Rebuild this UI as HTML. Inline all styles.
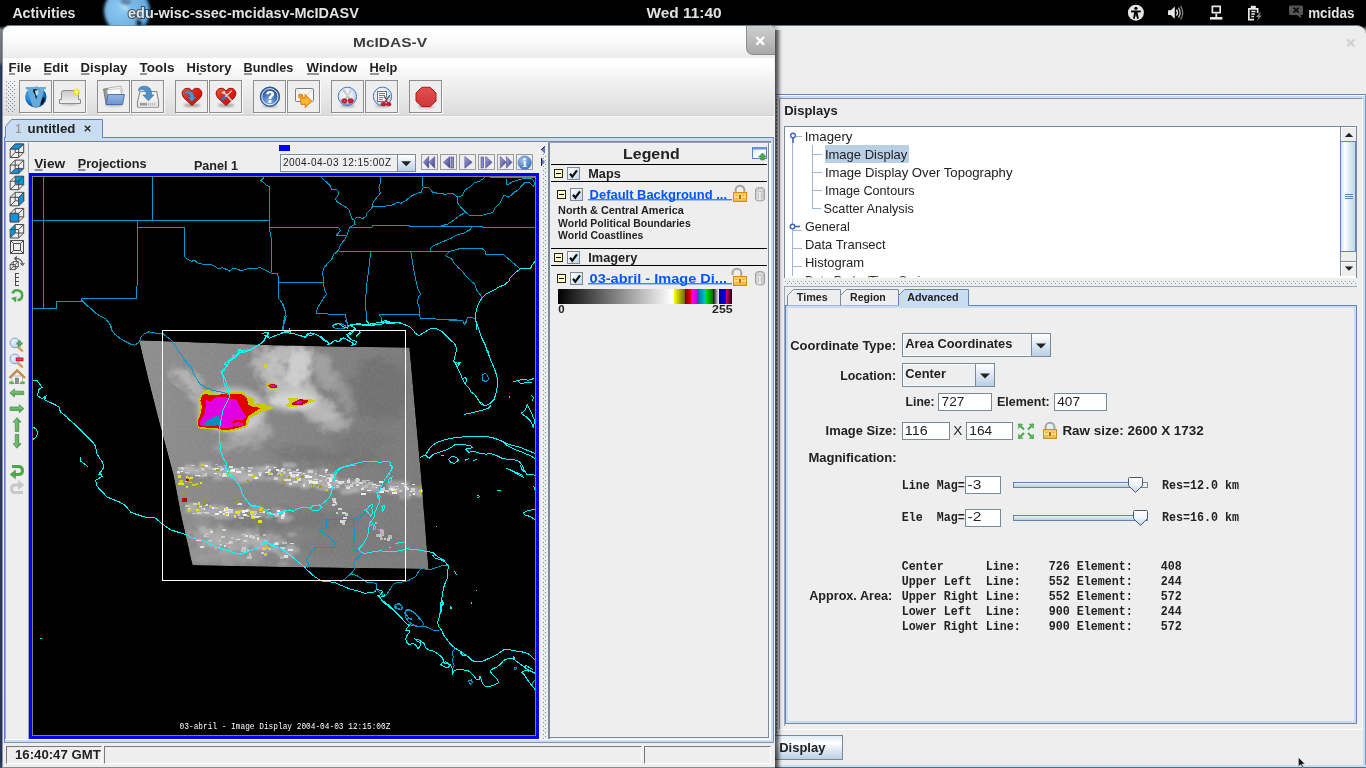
<!DOCTYPE html>
<html><head><meta charset="utf-8"><title>McIDAS-V</title>
<style>
html,body{margin:0;padding:0;}
body{width:1366px;height:768px;overflow:hidden;position:relative;background:#1c2a4a;font-family:"Liberation Sans",sans-serif;}
.a{position:absolute;box-sizing:border-box;}
.tb{position:absolute;box-sizing:border-box;width:33px;height:33px;top:80px;border:1px solid #8e8e8e;background:#eeeeee;box-shadow:1px 1px 0 #fbfbfb;}
.fld{position:absolute;box-sizing:border-box;background:#fff;border:1px solid #7a8a99;}
.ab{position:absolute;box-sizing:border-box;width:17px;height:16px;top:154px;border:1px solid #9a9a9a;background:#eeeeee;}
.ln{position:absolute;height:1px;background:#000;left:551px;width:216px;}
.mb{position:absolute;box-sizing:border-box;width:9px;height:9px;border:1px solid #222;background:#ffffc0;}
.mb:after{content:"";position:absolute;left:1px;top:3px;width:5px;height:1px;background:#000;}
.cb{position:absolute;box-sizing:border-box;width:13px;height:13px;border:1px solid #7a8a99;background:linear-gradient(135deg,#ffffff 0%,#c4d6ea 100%);}
</style></head><body>
<!-- desktop strip -->
<div class="a" style="left:0;top:0;width:1366px;height:768px;background:linear-gradient(180deg,#000 0px,#000 26px,#a4a4a4 30px,#8c8c8c 62px,#3a4a78 66px,#3a4a74 400px,#34446c 760px,#4a5470 768px);"></div>
<!-- top bar -->
<div class="a" style="left:0;top:0;width:1366px;height:26px;background:#000;"></div>
<!-- ===== right window ===== -->
<div class="a" style="left:770px;top:25px;width:596px;height:743px;background:#ededed;border-top-right-radius:9px;border-top:1px solid #6a7684;"></div>
<div class="a" style="left:770px;top:767px;width:596px;height:1px;background:#5a6a80;"></div>
<!-- tabbed pane outer border -->
<div class="a" style="left:775px;top:94px;width:591px;height:1px;background:#6382bf;"></div>
<div class="a" style="left:775px;top:95px;width:591px;height:1px;background:#ffffff;"></div>
<div class="a" style="left:775px;top:96px;width:591px;height:2px;background:#c8ddf2;"></div>
<div class="a" style="left:1363px;top:96px;width:2px;height:671px;background:#c8ddf2;"></div>
<div class="a" style="left:1365px;top:94px;width:1px;height:674px;background:#7f95bd;"></div>
<div class="a" style="left:770px;top:765px;width:596px;height:2px;background:#c8ddf2;"></div>
<div class="a" style="left:770px;top:767px;width:596px;height:1px;background:#5a6a80;"></div>
<!-- inner etched box -->
<div class="a" style="left:779px;top:98px;width:584px;height:632px;border:1px solid #8a97a6;border-right-color:#fff;border-bottom-color:#fff;background:#eeeeee;"></div>
<!-- vertical dotted splitter near left -->
<svg class="a" style="left:775px;top:98px;" width="4" height="635"><defs><pattern id="vdot" width="4" height="4" patternUnits="userSpaceOnUse"><rect x="1" y="1" width="1" height="2" fill="#3a3a3a" fill-opacity="0.6"/></pattern><pattern id="hdot" width="4" height="4" patternUnits="userSpaceOnUse"><rect x="0" y="0" width="1" height="1" fill="#8a97a6"/><rect x="2" y="2" width="1" height="1" fill="#8a97a6"/></pattern></defs><rect width="4" height="635" fill="url(#vdot)" shape-rendering="crispEdges"/></svg>
<!-- tree box -->
<div class="a" style="left:784px;top:126px;width:573px;height:152px;background:#fff;border:1px solid #7a8a99;border-bottom:none;"></div>
<!-- selection -->
<div class="a" style="left:825px;top:145px;width:84px;height:18px;background:#b8cfe5;"></div>
<!-- scrollbar -->
<div class="a" style="left:1340px;top:127px;width:16px;height:149px;background:#eeeeee;border-left:1px solid #7a8a99;"></div>
<div class="a" style="left:1340px;top:127px;width:16px;height:15px;background:#eeeeee;box-shadow:inset 1px 1px 0 #fff;border:1px solid #7a8a99;border-top:none;border-right:none;"></div>
<div class="a" style="left:1340px;top:261px;width:16px;height:15px;background:#eeeeee;box-shadow:inset 1px 1px 0 #fff;border:1px solid #7a8a99;border-bottom:none;border-right:none;"></div>
<div class="a" style="left:1340px;top:141px;width:16px;height:111px;background:linear-gradient(90deg,#cfe0f3 0%,#ffffff 28%,#dfeaf6 60%,#c4d7ec 100%);border:1px solid #6382bf;"></div>
<!-- horizontal dotted splitter -->
<svg class="a" style="left:785px;top:281px;" width="571" height="4"><rect width="573" height="4" fill="url(#hdot)" shape-rendering="crispEdges"/></svg>
<!-- bottom panel top border -->
<div class="a" style="left:784px;top:286px;width:573px;height:1px;background:#9aa7b4;"></div>
<div class="a" style="left:784px;top:286px;width:1px;height:440px;background:#9aa7b4;"></div>
<!-- tabs content -->
<div class="a" style="left:785px;top:305px;width:572px;height:419px;background:#eeeeee;border:1px solid #6382bf;border-bottom-color:#7a8a99;box-shadow:inset 0 0 0 2px #c8ddf2;"></div>
<!-- tabs -->
<svg class="a" style="left:785px;top:287px;" width="200" height="22" viewBox="0 0 200 22">
<path d="M2.5,18.5 L2.5,8.5 L8.5,2.5 L55.5,2.5 L55.5,18.5" fill="#eeeeee" stroke="#7a8a99"/>
<path d="M55.5,18.5 L55.5,8.5 L61.5,2.5 L113.5,2.5 L113.5,18.5" fill="#eeeeee" stroke="#7a8a99"/>
<path d="M113.5,21 L113.5,8.5 L119.5,2.5 L183.5,2.5 L183.5,21 Z" fill="#c8ddf2" stroke="none"/>
<path d="M113.5,18.5 L113.5,8.5 L119.5,2.5 L183.5,2.5 L183.5,18.5" fill="none" stroke="#6382bf"/>
</svg>
<!-- combos -->
<div class="a" style="left:902px;top:333px;width:149px;height:24px;border:1px solid #7a8a99;background:#eeeeee;box-shadow:inset 0 0 0 1px #fff;"></div>
<div class="a" style="left:1031px;top:333px;width:20px;height:24px;border:1px solid #7a8a99;background:linear-gradient(180deg,#ffffff 0%,#dde8f3 50%,#b8cfe5 100%);"></div>
<div class="a" style="left:902px;top:363px;width:93px;height:24px;border:1px solid #7a8a99;background:#eeeeee;box-shadow:inset 0 0 0 1px #fff;"></div>
<div class="a" style="left:975px;top:363px;width:20px;height:24px;border:1px solid #7a8a99;background:linear-gradient(180deg,#ffffff 0%,#dde8f3 50%,#b8cfe5 100%);"></div>
<!-- fields -->
<div class="fld" style="left:938px;top:393px;width:54px;height:18px;"></div>
<div class="fld" style="left:1054px;top:393px;width:53px;height:18px;"></div>
<div class="fld" style="left:902px;top:422px;width:48px;height:18px;"></div>
<div class="fld" style="left:966px;top:422px;width:47px;height:18px;"></div>
<div class="fld" style="left:965px;top:476px;width:36px;height:18px;"></div>
<div class="fld" style="left:965px;top:509px;width:36px;height:18px;"></div>
<!-- sliders -->
<div class="a" style="left:1013px;top:482px;width:135px;height:6px;border:1px solid #6382bf;background:linear-gradient(180deg,#e8f0fa,#b8cfe5);"></div>
<div class="a" style="left:1013px;top:515px;width:135px;height:6px;border:1px solid #6382bf;background:linear-gradient(180deg,#e8f0fa,#b8cfe5);"></div>
<!-- Display button -->
<div class="a" style="left:770px;top:735px;width:73px;height:25px;border:1px solid #7a8a99;background:linear-gradient(180deg,#dfe9f4 0%,#ffffff 30%,#dbe6f2 65%,#b8cfe5 100%);"></div>
<!-- ===== left window ===== -->
<div class="a" style="left:2px;top:25px;width:773px;height:743px;background:#eeeeee;border-top-left-radius:8px;border-top-right-radius:6px;box-shadow:0 0 6px 1px rgba(0,0,0,0.5);border-left:1px solid #8a96b0;"></div>
<div class="a" style="left:775px;top:30px;width:7px;height:738px;background:linear-gradient(90deg,rgba(0,0,0,0.55) 0%,rgba(0,0,0,0.42) 35%,rgba(0,0,0,0.15) 70%,rgba(0,0,0,0) 100%);"></div>
<!-- title bar -->
<div class="a" style="left:3px;top:25px;width:772px;height:33px;border-top-left-radius:7px;border-top-right-radius:6px;background:linear-gradient(180deg,#ffffff 0%,#fafafa 50%,#ebebeb 100%);border-top:1px solid #6a7a8a;"></div>
<!-- close button -->
<div class="a" style="left:746px;top:26px;width:29px;height:29px;border-bottom-left-radius:7px;border-top-right-radius:6px;background:linear-gradient(180deg,#cecece 0%,#bcbcbc 50%,#a8a8a8 100%);border-left:1px solid #8e8e8e;border-bottom:1px solid #8a8a8a;"></div>
<!-- menu + toolbar gradient -->
<div class="a" style="left:3px;top:58px;width:771px;height:58px;background:linear-gradient(180deg,#ffffff 0%,#fdfdfd 12%,#f1f1f1 40%,#e7e7e7 70%,#dcdcdc 97%,#cdcdcd 100%);"></div>
<div class="a" style="left:4px;top:116px;width:770px;height:1px;background:#f8f8f8;"></div>
<!-- toolbar grip -->
<svg class="a" style="left:6px;top:81px;" width="10" height="32"><defs><pattern id="grip" width="4" height="4" patternUnits="userSpaceOnUse"><rect x="0" y="0" width="1" height="1" fill="#7a8a99"/><rect x="2" y="2" width="1" height="1" fill="#7a8a99"/></pattern></defs><rect width="10" height="32" fill="url(#grip)" shape-rendering="crispEdges"/></svg>
<!-- toolbar buttons -->
<div class="tb" style="left:19px;"></div><div class="tb" style="left:53px;"></div>
<div class="tb" style="left:97px;"></div><div class="tb" style="left:131px;"></div>
<div class="tb" style="left:175px;"></div><div class="tb" style="left:209px;"></div>
<div class="tb" style="left:253px;"></div><div class="tb" style="left:287px;"></div>
<div class="tb" style="left:331px;"></div><div class="tb" style="left:365px;"></div>
<div class="tb" style="left:409px;"></div>
<!-- tab pane content border -->
<div class="a" style="left:4px;top:137px;width:770px;height:606px;border:1px solid #6382bf;border-bottom-color:#8494a6;border-right-color:#7f95bd;background:#c8ddf2;"></div>
<div class="a" style="left:5px;top:141px;width:766px;height:598px;background:#eeeeee;border-top:1px solid #828282;border-left:1px solid #9aa7b4;"></div>
<div class="a" style="left:548px;top:142px;width:223px;height:1px;background:#9aa4b0;"></div>
<!-- tab -->
<svg class="a" style="left:4px;top:118px;" width="104" height="24" viewBox="0 0 104 24">
<path d="M1.5,22 L1.5,8.5 L7.5,1.5 L98.5,1.5 L98.5,22 Z" fill="#c8ddf2"/>
<path d="M1.5,20 L1.5,8.5 L7.5,1.5 L98.5,1.5 L98.5,19.5" fill="none" stroke="#6382bf"/>
</svg>
<!-- left icon column separator -->
<div class="a" style="left:28px;top:143px;width:1px;height:597px;background:#9aa7b4;"></div>
<!-- view border -->
<div class="a" style="left:29px;top:173px;width:510px;height:566px;background:#0000ff;"></div>
<div class="a" style="left:32px;top:176px;width:504px;height:560px;background:#808080;"></div>
<div class="a" style="left:33px;top:177px;width:502px;height:558px;background:#000;"></div>
<!-- anim widgets -->
<div class="a" style="left:279px;top:145px;width:11px;height:6px;background:#0000ff;"></div>
<div class="a" style="left:280px;top:154px;width:136px;height:18px;border:1px solid #7a8a99;background:#eeeeee;box-shadow:inset 0 0 0 1px #fff;"></div>
<div class="a" style="left:397px;top:154px;width:19px;height:18px;border:1px solid #7a8a99;background:linear-gradient(180deg,#ffffff 0%,#dde8f3 50%,#b8cfe5 100%);"></div>
<div class="ab" style="left:421px;"></div><div class="ab" style="left:440px;"></div><div class="ab" style="left:459px;"></div>
<div class="ab" style="left:478px;"></div><div class="ab" style="left:497px;"></div><div class="ab" style="left:516px;"></div>
<!-- splitter -->
<svg class="a" style="left:543px;top:154px;" width="3" height="585"><rect width="3" height="585" fill="url(#grip)" shape-rendering="crispEdges"/></svg>
<div class="a" style="left:548px;top:143px;width:2px;height:596px;background:#7a8a99;"></div>
<!-- legend -->
<div class="a" style="left:550px;top:143px;width:219px;height:595px;background:#eeeeee;border-right:1px solid #7a8a99;border-bottom:1px solid #7a8a99;"></div>
<div class="a" style="left:769px;top:143px;width:2px;height:597px;background:#fff;"></div>
<div class="a" style="left:5px;top:739px;width:766px;height:1px;background:#fff;"></div>
<div class="ln" style="top:164px;"></div><div class="ln" style="top:181px;"></div>
<div class="ln" style="top:248px;"></div><div class="ln" style="top:265px;"></div>
<div class="mb" style="left:554px;top:169px;"></div><div class="cb" style="left:567px;top:167px;"></div>
<div class="mb" style="left:557px;top:190px;"></div><div class="cb" style="left:570px;top:188px;"></div>
<div class="mb" style="left:554px;top:253px;"></div><div class="cb" style="left:567px;top:251px;"></div>
<div class="mb" style="left:557px;top:274px;"></div><div class="cb" style="left:570px;top:272px;"></div>
<!-- colorbar -->
<div class="a" style="left:558px;top:289px;width:174px;height:15px;background:linear-gradient(90deg,#000 0px,#fff 114px,#fff 116px,#ffff00 116px,#6a6a00 127px,#700000 127px,#ff0000 133px,#ff00ff 134px,#c000c0 140px,#0070a0 140px,#00c8d8 148px,#00e000 148px,#007000 155px,#000 155px,#fff 161px,#000090 161px,#0000ff 168px,#e00070 168px,#200010 174px);"></div>
<!-- status bar -->
<div class="a" style="left:4px;top:743px;width:770px;height:3px;background:#eeeeee;"></div>
<div class="a" style="left:6px;top:746px;width:96px;height:18px;border:1px solid #7a7a7a;border-right-color:#fff;border-bottom-color:#fff;background:#eeeeee;"></div>
<div class="a" style="left:104px;top:746px;width:538px;height:18px;border:1px solid #7a7a7a;border-right-color:#fff;border-bottom-color:#fff;background:#eeeeee;"></div>
<div class="a" style="left:644px;top:746px;width:127px;height:18px;border:1px solid #7a7a7a;border-right-color:#fff;border-bottom-color:#fff;background:#eeeeee;"></div>
<div class="a" style="left:3px;top:767px;width:772px;height:1px;background:#8a8a8a;"></div>
<!-- map -->
<svg class="a" style="left:33px;top:177px;" width="502" height="558" viewBox="33 177 502 558">
<defs><clipPath id="satc"><polygon points="139.0,340.2 200.0,342.5 280.0,345.5 350.0,346.8 409.5,347.5 412.0,375.0 416.0,420.0 421.0,475.0 425.0,525.0 428.5,569.0 350.0,568.0 280.0,567.0 192.5,565.3 181.0,515.0 173.5,475.0 160.0,425.0 148.0,378.0"/></clipPath>
<filter id="b6" x="-50%" y="-50%" width="200%" height="200%"><feGaussianBlur stdDeviation="6"/></filter>
<filter id="b3" x="-50%" y="-50%" width="200%" height="200%"><feGaussianBlur stdDeviation="3"/></filter>
<filter id="b15" x="-50%" y="-50%" width="200%" height="200%"><feGaussianBlur stdDeviation="1.5"/></filter>
<filter id="cl" x="-30%" y="-30%" width="160%" height="160%"><feGaussianBlur stdDeviation="3.5" result="b"/><feTurbulence type="fractalNoise" baseFrequency="0.09" numOctaves="3" seed="4" result="t"/><feDisplacementMap in="b" in2="t" scale="16" xChannelSelector="R" yChannelSelector="G"/></filter>
<filter id="nz" x="0" y="0" width="100%" height="100%"><feTurbulence type="fractalNoise" baseFrequency="0.35" numOctaves="2" seed="9"/><feColorMatrix type="matrix" values="0 0 0 0 1  0 0 0 0 1  0 0 0 0 1  1.2 0 0 0 -0.45"/></filter>
<linearGradient id="satg" x1="0" y1="0" x2="1" y2="0"><stop offset="0" stop-color="#8e8e8e"/><stop offset="0.5" stop-color="#848484"/><stop offset="1" stop-color="#7a7a7a"/></linearGradient></defs>
<g clip-path="url(#satc)">
<polygon points="139.0,340.2 200.0,342.5 280.0,345.5 350.0,346.8 409.5,347.5 412.0,375.0 416.0,420.0 421.0,475.0 425.0,525.0 428.5,569.0 350.0,568.0 280.0,567.0 192.5,565.3 181.0,515.0 173.5,475.0 160.0,425.0 148.0,378.0" fill="url(#satg)"/>
<ellipse cx="266" cy="364" rx="14" ry="16" fill="#c6c6c6" opacity="0.7" filter="url(#cl)" transform="rotate(10 266 364)"/>
<ellipse cx="283" cy="352" rx="14" ry="8" fill="#cccccc" opacity="0.7" filter="url(#cl)" transform="rotate(0 283 352)"/>
<ellipse cx="299" cy="366" rx="12" ry="22" fill="#dadada" opacity="0.85" filter="url(#cl)" transform="rotate(15 299 366)"/>
<ellipse cx="292" cy="392" rx="27" ry="15" fill="#d0d0d0" opacity="0.75" filter="url(#cl)" transform="rotate(10 292 392)"/>
<ellipse cx="275" cy="372" rx="9" ry="20" fill="#c8c8c8" opacity="0.7" filter="url(#cl)" transform="rotate(20 275 372)"/>
<ellipse cx="310" cy="405" rx="30" ry="11" fill="#c8c8c8" opacity="0.7" filter="url(#cl)" transform="rotate(25 310 405)"/>
<ellipse cx="250" cy="430" rx="22" ry="9" fill="#c4c4c4" opacity="0.6" filter="url(#cl)" transform="rotate(-10 250 430)"/>
<ellipse cx="240" cy="444" rx="26" ry="6" fill="#bcbcbc" opacity="0.5" filter="url(#cl)" transform="rotate(-8 240 444)"/>
<ellipse cx="330" cy="420" rx="22" ry="10" fill="#bcbcbc" opacity="0.7" filter="url(#cl)" transform="rotate(30 330 420)"/>
<ellipse cx="188" cy="380" rx="20" ry="7" fill="#c0c0c0" opacity="0.8" filter="url(#cl)" transform="rotate(35 188 380)"/>
<ellipse cx="200" cy="398" rx="14" ry="7" fill="#bebebe" opacity="0.7" filter="url(#cl)" transform="rotate(30 200 398)"/>
<ellipse cx="325" cy="372" rx="10" ry="22" fill="#b4b4b4" opacity="0.6" filter="url(#cl)" transform="rotate(-25 325 372)"/>
<ellipse cx="345" cy="395" rx="8" ry="20" fill="#a8a8a8" opacity="0.5" filter="url(#cl)" transform="rotate(-25 345 395)"/>
<ellipse cx="380" cy="390" rx="28" ry="32" fill="#6e6e6e" opacity="0.7" filter="url(#cl)" transform="rotate(0 380 390)"/>
<ellipse cx="360" cy="440" rx="30" ry="12" fill="#727272" opacity="0.5" filter="url(#cl)" transform="rotate(0 360 440)"/>
<ellipse cx="395" cy="520" rx="30" ry="40" fill="#7c7c7c" opacity="0.5" filter="url(#cl)" transform="rotate(0 395 520)"/>
<ellipse cx="330" cy="457" rx="60" ry="7" fill="#6c6c6c" opacity="0.55" filter="url(#cl)" transform="rotate(3 330 457)"/>
<ellipse cx="290" cy="520" rx="70" ry="10" fill="#707070" opacity="0.55" filter="url(#cl)" transform="rotate(0 290 520)"/>
<ellipse cx="350" cy="545" rx="50" ry="16" fill="#787878" opacity="0.5" filter="url(#cl)" transform="rotate(0 350 545)"/>
<ellipse cx="232" cy="538" rx="45" ry="10" fill="#b0b0b0" opacity="0.7" filter="url(#cl)" transform="rotate(5 232 538)"/>
<ellipse cx="225" cy="557" rx="40" ry="6" fill="#a8a8a8" opacity="0.6" filter="url(#cl)" transform="rotate(0 225 557)"/>
<ellipse cx="200" cy="530" rx="10" ry="25" fill="#9a9a9a" opacity="0.5" filter="url(#cl)" transform="rotate(0 200 530)"/>
<g filter="url(#b15)" opacity="0.45">
<rect x="225.9" y="473.6" width="6.6" height="4.6" fill="#c8c8c8"/>
<rect x="265.7" y="476.8" width="13.3" height="3.6" fill="#d8d8d8"/>
<rect x="242.8" y="472.9" width="9.4" height="5.5" fill="#d8d8d8"/>
<rect x="321.9" y="476.2" width="11.0" height="4.7" fill="#d8d8d8"/>
<rect x="264.9" y="465.0" width="6.4" height="5.6" fill="#c8c8c8"/>
<rect x="240.5" y="477.1" width="10.3" height="4.7" fill="#e8e8e8"/>
<rect x="301.7" y="476.5" width="11.1" height="4.1" fill="#e8e8e8"/>
<rect x="285.7" y="477.9" width="10.5" height="4.9" fill="#c8c8c8"/>
<rect x="280.8" y="470.7" width="10.7" height="4.4" fill="#c8c8c8"/>
<rect x="214.3" y="471.3" width="7.4" height="5.3" fill="#d8d8d8"/>
<rect x="264.5" y="465.5" width="11.8" height="3.9" fill="#d8d8d8"/>
<rect x="194.2" y="467.8" width="9.3" height="5.3" fill="#d8d8d8"/>
<rect x="319.7" y="467.6" width="6.6" height="4.7" fill="#c8c8c8"/>
<rect x="228.4" y="474.9" width="8.8" height="4.5" fill="#c8c8c8"/>
<rect x="186.6" y="470.9" width="11.6" height="3.2" fill="#e8e8e8"/>
<rect x="284.0" y="475.2" width="11.2" height="6.0" fill="#c8c8c8"/>
<rect x="219.8" y="466.4" width="6.2" height="4.4" fill="#d8d8d8"/>
<rect x="270.1" y="476.3" width="9.9" height="3.7" fill="#c8c8c8"/>
<rect x="195.9" y="469.1" width="13.0" height="3.2" fill="#c8c8c8"/>
<rect x="237.9" y="474.7" width="8.2" height="3.4" fill="#c8c8c8"/>
<rect x="309.1" y="474.3" width="8.9" height="5.7" fill="#d8d8d8"/>
<rect x="199.2" y="472.8" width="7.4" height="3.7" fill="#d8d8d8"/>
<rect x="177.9" y="469.2" width="8.3" height="3.4" fill="#e8e8e8"/>
<rect x="232.9" y="469.0" width="10.5" height="5.9" fill="#e8e8e8"/>
<rect x="308.3" y="479.7" width="11.9" height="4.4" fill="#e8e8e8"/>
<rect x="298.9" y="472.8" width="9.1" height="4.2" fill="#d8d8d8"/>
<rect x="250.2" y="470.0" width="13.9" height="4.3" fill="#d8d8d8"/>
<rect x="228.4" y="472.1" width="6.4" height="3.0" fill="#d8d8d8"/>
<rect x="258.6" y="476.9" width="6.6" height="3.6" fill="#c8c8c8"/>
<rect x="198.9" y="467.7" width="8.0" height="4.0" fill="#c8c8c8"/>
<rect x="249.0" y="474.8" width="13.8" height="4.4" fill="#c8c8c8"/>
<rect x="189.2" y="471.4" width="6.8" height="4.0" fill="#c8c8c8"/>
<rect x="249.7" y="470.3" width="7.6" height="5.9" fill="#c8c8c8"/>
<rect x="198.6" y="465.2" width="10.3" height="3.1" fill="#e8e8e8"/>
<rect x="221.9" y="469.4" width="12.8" height="4.6" fill="#d8d8d8"/>
<rect x="230.8" y="469.6" width="7.8" height="4.6" fill="#e8e8e8"/>
<rect x="226.8" y="471.7" width="13.9" height="5.6" fill="#d8d8d8"/>
<rect x="302.0" y="480.8" width="11.9" height="3.7" fill="#e8e8e8"/>
<rect x="251.9" y="470.7" width="12.3" height="4.4" fill="#d8d8d8"/>
<rect x="282.6" y="463.0" width="13.7" height="4.3" fill="#e8e8e8"/>
<rect x="328.2" y="479.1" width="7.8" height="3.7" fill="#d8d8d8"/>
<rect x="228.0" y="469.8" width="9.9" height="6.0" fill="#e8e8e8"/>
<rect x="305.4" y="469.7" width="12.4" height="3.3" fill="#e8e8e8"/>
<rect x="194.5" y="469.6" width="9.1" height="5.1" fill="#d8d8d8"/>
<rect x="249.6" y="474.5" width="8.7" height="5.4" fill="#e8e8e8"/>
<rect x="237.0" y="476.7" width="9.2" height="5.8" fill="#e8e8e8"/>
<rect x="200.5" y="470.1" width="10.7" height="4.4" fill="#e8e8e8"/>
<rect x="198.5" y="469.1" width="12.6" height="5.9" fill="#e8e8e8"/>
<rect x="320.4" y="478.0" width="6.2" height="5.4" fill="#e8e8e8"/>
<rect x="276.0" y="476.9" width="10.2" height="5.8" fill="#c8c8c8"/>
<rect x="327.9" y="478.3" width="6.2" height="3.6" fill="#e8e8e8"/>
<rect x="213.0" y="476.6" width="10.7" height="3.8" fill="#c8c8c8"/>
<rect x="304.5" y="480.0" width="13.2" height="5.0" fill="#e8e8e8"/>
<rect x="240.8" y="473.5" width="13.3" height="4.5" fill="#e8e8e8"/>
<rect x="199.4" y="462.1" width="12.2" height="4.8" fill="#d8d8d8"/>
<rect x="202.5" y="468.9" width="9.8" height="5.2" fill="#e8e8e8"/>
<rect x="185.5" y="466.7" width="9.9" height="5.3" fill="#e8e8e8"/>
<rect x="184.8" y="464.5" width="7.5" height="3.1" fill="#d8d8d8"/>
<rect x="254.2" y="466.6" width="13.3" height="4.3" fill="#e8e8e8"/>
<rect x="325.9" y="473.6" width="10.8" height="3.6" fill="#c8c8c8"/>
<rect x="245.7" y="467.7" width="13.5" height="5.1" fill="#c8c8c8"/>
<rect x="318.1" y="474.6" width="13.1" height="3.6" fill="#c8c8c8"/>
<rect x="197.1" y="471.8" width="6.6" height="3.7" fill="#d8d8d8"/>
<rect x="208.8" y="472.3" width="8.4" height="3.4" fill="#d8d8d8"/>
<rect x="320.7" y="473.4" width="8.0" height="3.4" fill="#c8c8c8"/>
<rect x="209.8" y="467.1" width="13.6" height="4.2" fill="#c8c8c8"/>
<rect x="201.1" y="468.1" width="11.7" height="6.0" fill="#c8c8c8"/>
<rect x="228.2" y="468.5" width="7.6" height="4.0" fill="#e8e8e8"/>
<rect x="232.4" y="468.9" width="11.6" height="4.2" fill="#e8e8e8"/>
<rect x="272.1" y="476.3" width="10.1" height="3.2" fill="#d8d8d8"/>
<rect x="418.0" y="491.8" width="6.3" height="5.3" fill="#c8c8c8"/>
<rect x="387.3" y="488.3" width="12.6" height="5.5" fill="#e8e8e8"/>
<rect x="396.3" y="487.4" width="13.4" height="4.7" fill="#e8e8e8"/>
<rect x="326.4" y="482.6" width="8.2" height="5.4" fill="#d8d8d8"/>
<rect x="340.4" y="489.4" width="11.1" height="5.4" fill="#d8d8d8"/>
<rect x="366.4" y="488.1" width="7.8" height="3.8" fill="#d8d8d8"/>
<rect x="344.4" y="480.0" width="13.4" height="3.8" fill="#d8d8d8"/>
<rect x="286.1" y="480.4" width="11.7" height="5.8" fill="#d8d8d8"/>
<rect x="317.2" y="483.1" width="11.0" height="4.6" fill="#d8d8d8"/>
<rect x="321.2" y="487.4" width="10.0" height="3.5" fill="#c8c8c8"/>
<rect x="394.1" y="488.2" width="6.1" height="4.5" fill="#d8d8d8"/>
<rect x="353.0" y="483.2" width="8.0" height="4.3" fill="#e8e8e8"/>
<rect x="396.3" y="483.7" width="12.7" height="4.2" fill="#e8e8e8"/>
<rect x="323.7" y="482.0" width="7.7" height="3.7" fill="#d8d8d8"/>
<rect x="398.2" y="486.3" width="9.2" height="4.0" fill="#d8d8d8"/>
<rect x="398.9" y="482.9" width="6.1" height="4.9" fill="#c8c8c8"/>
<rect x="341.2" y="486.9" width="9.0" height="4.5" fill="#c8c8c8"/>
<rect x="365.0" y="486.1" width="11.5" height="3.1" fill="#d8d8d8"/>
<rect x="302.4" y="475.6" width="13.7" height="5.9" fill="#e8e8e8"/>
<rect x="325.9" y="481.4" width="6.3" height="5.6" fill="#d8d8d8"/>
<rect x="330.6" y="484.4" width="9.8" height="4.5" fill="#d8d8d8"/>
<rect x="315.2" y="479.5" width="12.2" height="3.3" fill="#d8d8d8"/>
<rect x="300.4" y="475.0" width="8.4" height="4.9" fill="#d8d8d8"/>
<rect x="363.2" y="482.4" width="10.2" height="5.3" fill="#e8e8e8"/>
<rect x="406.8" y="489.5" width="12.1" height="5.2" fill="#c8c8c8"/>
<rect x="301.2" y="473.5" width="11.8" height="4.9" fill="#d8d8d8"/>
<rect x="397.1" y="486.6" width="9.4" height="5.1" fill="#e8e8e8"/>
<rect x="299.8" y="473.9" width="10.2" height="4.5" fill="#d8d8d8"/>
<rect x="397.4" y="481.2" width="11.5" height="5.1" fill="#d8d8d8"/>
<rect x="292.1" y="473.5" width="6.3" height="4.9" fill="#d8d8d8"/>
<rect x="333.5" y="480.2" width="6.2" height="4.6" fill="#d8d8d8"/>
<rect x="349.5" y="483.2" width="6.0" height="5.4" fill="#e8e8e8"/>
<rect x="412.4" y="490.3" width="10.2" height="5.2" fill="#c8c8c8"/>
<rect x="315.8" y="478.6" width="6.6" height="3.8" fill="#e8e8e8"/>
<rect x="387.4" y="487.2" width="9.7" height="5.5" fill="#d8d8d8"/>
<rect x="348.0" y="487.7" width="11.5" height="5.3" fill="#e8e8e8"/>
<rect x="369.9" y="486.4" width="8.7" height="5.0" fill="#e8e8e8"/>
<rect x="323.2" y="484.8" width="10.5" height="3.0" fill="#d8d8d8"/>
<rect x="349.0" y="484.4" width="7.7" height="4.5" fill="#e8e8e8"/>
<rect x="353.3" y="483.0" width="9.7" height="4.4" fill="#d8d8d8"/>
<rect x="421.0" y="487.0" width="6.7" height="4.4" fill="#c8c8c8"/>
<rect x="345.2" y="481.5" width="12.6" height="5.9" fill="#c8c8c8"/>
<rect x="421.1" y="484.0" width="13.4" height="3.2" fill="#d8d8d8"/>
<rect x="300.1" y="483.1" width="10.2" height="5.9" fill="#d8d8d8"/>
<rect x="365.7" y="482.5" width="6.9" height="4.1" fill="#c8c8c8"/>
<rect x="407.5" y="486.5" width="9.9" height="3.1" fill="#d8d8d8"/>
<rect x="414.9" y="487.8" width="11.8" height="4.2" fill="#c8c8c8"/>
<rect x="324.9" y="477.2" width="12.7" height="3.0" fill="#c8c8c8"/>
<rect x="399.2" y="493.6" width="11.7" height="5.7" fill="#c8c8c8"/>
<rect x="316.0" y="485.0" width="6.5" height="4.2" fill="#e8e8e8"/>
<rect x="290.8" y="482.3" width="12.8" height="3.8" fill="#d8d8d8"/>
<rect x="398.5" y="485.0" width="8.3" height="5.8" fill="#d8d8d8"/>
<rect x="417.9" y="486.8" width="12.2" height="5.4" fill="#c8c8c8"/>
<rect x="405.6" y="489.6" width="12.5" height="4.9" fill="#e8e8e8"/>
<rect x="358.0" y="483.5" width="11.9" height="4.4" fill="#d8d8d8"/>
<rect x="371.5" y="483.9" width="8.3" height="3.1" fill="#e8e8e8"/>
<rect x="298.1" y="474.6" width="8.4" height="5.2" fill="#e8e8e8"/>
<rect x="316.9" y="480.2" width="11.2" height="3.9" fill="#e8e8e8"/>
<rect x="375.0" y="489.0" width="6.6" height="4.5" fill="#c8c8c8"/>
<rect x="358.2" y="487.1" width="9.6" height="4.0" fill="#c8c8c8"/>
<rect x="340.7" y="479.5" width="7.4" height="4.7" fill="#c8c8c8"/>
<rect x="314.0" y="478.6" width="8.1" height="4.7" fill="#d8d8d8"/>
<rect x="386.5" y="483.4" width="10.2" height="4.1" fill="#c8c8c8"/>
<rect x="386.8" y="488.4" width="10.0" height="4.7" fill="#c8c8c8"/>
<rect x="297.9" y="472.8" width="12.9" height="3.6" fill="#c8c8c8"/>
<rect x="407.3" y="488.4" width="9.1" height="4.9" fill="#c8c8c8"/>
<rect x="415.5" y="493.5" width="6.2" height="3.1" fill="#e8e8e8"/>
<rect x="388.4" y="480.9" width="12.4" height="5.9" fill="#c8c8c8"/>
<rect x="280.0" y="469.8" width="12.6" height="5.6" fill="#c8c8c8"/>
<rect x="315.3" y="484.5" width="6.9" height="3.5" fill="#e8e8e8"/>
<rect x="277.3" y="517.2" width="11.6" height="5.5" fill="#c0c0c0"/>
<rect x="193.1" y="512.0" width="12.2" height="3.0" fill="#d0d0d0"/>
<rect x="207.1" y="512.9" width="8.4" height="3.4" fill="#c0c0c0"/>
<rect x="235.2" y="508.6" width="9.5" height="5.3" fill="#d0d0d0"/>
<rect x="191.7" y="504.4" width="9.1" height="3.7" fill="#e0e0e0"/>
<rect x="185.1" y="507.4" width="10.3" height="6.0" fill="#c0c0c0"/>
<rect x="276.1" y="509.0" width="9.8" height="3.7" fill="#d0d0d0"/>
<rect x="187.8" y="503.2" width="9.3" height="4.9" fill="#d0d0d0"/>
<rect x="187.1" y="503.6" width="9.4" height="3.8" fill="#e0e0e0"/>
<rect x="225.3" y="510.2" width="9.0" height="4.5" fill="#e0e0e0"/>
<rect x="217.1" y="505.7" width="7.6" height="5.4" fill="#e0e0e0"/>
<rect x="265.3" y="514.4" width="6.5" height="4.5" fill="#d0d0d0"/>
<rect x="214.6" y="510.5" width="7.8" height="5.3" fill="#c0c0c0"/>
<rect x="195.4" y="506.6" width="11.0" height="4.8" fill="#d0d0d0"/>
<rect x="231.1" y="511.3" width="10.8" height="5.8" fill="#d0d0d0"/>
<rect x="205.2" y="508.5" width="13.8" height="3.4" fill="#d0d0d0"/>
<rect x="252.4" y="512.9" width="11.7" height="3.9" fill="#d0d0d0"/>
<rect x="279.8" y="516.0" width="13.5" height="4.0" fill="#d0d0d0"/>
<rect x="247.0" y="507.9" width="8.5" height="5.2" fill="#c0c0c0"/>
<rect x="278.6" y="512.4" width="9.5" height="3.3" fill="#d0d0d0"/>
<rect x="211.6" y="504.9" width="7.0" height="5.9" fill="#d0d0d0"/>
<rect x="221.1" y="515.9" width="12.1" height="3.9" fill="#c0c0c0"/>
<rect x="193.3" y="507.9" width="10.3" height="4.3" fill="#c0c0c0"/>
<rect x="219.6" y="507.9" width="13.2" height="3.1" fill="#c0c0c0"/>
<rect x="208.6" y="507.1" width="9.0" height="4.4" fill="#d0d0d0"/>
<rect x="209.4" y="507.1" width="12.0" height="5.7" fill="#c0c0c0"/>
<rect x="219.5" y="506.0" width="6.3" height="5.2" fill="#e0e0e0"/>
<rect x="215.1" y="516.0" width="8.2" height="3.0" fill="#e0e0e0"/>
<rect x="272.1" y="507.8" width="6.2" height="3.7" fill="#c0c0c0"/>
<rect x="253.0" y="506.2" width="9.7" height="5.3" fill="#c0c0c0"/>
<rect x="271.8" y="513.2" width="10.0" height="3.0" fill="#e0e0e0"/>
<rect x="213.8" y="508.0" width="11.5" height="3.5" fill="#d0d0d0"/>
<rect x="216.1" y="508.4" width="12.3" height="3.2" fill="#d0d0d0"/>
<rect x="222.2" y="512.5" width="7.3" height="4.2" fill="#e0e0e0"/>
<rect x="188.2" y="505.6" width="13.8" height="5.7" fill="#d0d0d0"/>
<rect x="210.2" y="508.5" width="6.7" height="3.3" fill="#c0c0c0"/>
<rect x="278.9" y="514.8" width="7.1" height="4.4" fill="#e0e0e0"/>
<rect x="207.3" y="508.9" width="10.3" height="5.3" fill="#d0d0d0"/>
<rect x="259.1" y="511.2" width="8.1" height="3.8" fill="#c0c0c0"/>
<rect x="203.9" y="511.3" width="8.0" height="3.7" fill="#d0d0d0"/>
<rect x="221.7" y="541.9" width="5.5" height="3.8" fill="#c8c8c8"/>
<rect x="243.2" y="539.5" width="6.6" height="5.4" fill="#d8d8d8"/>
<rect x="239.1" y="541.6" width="11.2" height="3.7" fill="#b8b8b8"/>
<rect x="281.9" y="547.0" width="5.3" height="3.9" fill="#c8c8c8"/>
<rect x="199.8" y="526.6" width="6.4" height="3.2" fill="#d8d8d8"/>
<rect x="277.3" y="539.6" width="8.1" height="3.8" fill="#d8d8d8"/>
<rect x="284.8" y="553.7" width="9.3" height="3.7" fill="#b8b8b8"/>
<rect x="227.3" y="544.4" width="5.3" height="6.0" fill="#c8c8c8"/>
<rect x="251.9" y="540.4" width="5.1" height="4.0" fill="#d8d8d8"/>
<rect x="230.3" y="536.5" width="9.3" height="3.2" fill="#c8c8c8"/>
<rect x="270.6" y="543.3" width="5.7" height="4.2" fill="#d8d8d8"/>
<rect x="209.7" y="536.4" width="8.7" height="5.0" fill="#b8b8b8"/>
<rect x="261.1" y="539.9" width="7.2" height="5.9" fill="#b8b8b8"/>
<rect x="265.8" y="547.3" width="11.2" height="4.2" fill="#c8c8c8"/>
<rect x="277.1" y="551.9" width="6.4" height="5.2" fill="#c8c8c8"/>
<rect x="284.5" y="547.1" width="8.0" height="3.5" fill="#c8c8c8"/>
<rect x="272.9" y="535.3" width="8.2" height="3.5" fill="#c8c8c8"/>
<rect x="199.9" y="542.6" width="6.0" height="5.4" fill="#b8b8b8"/>
<rect x="203.5" y="532.0" width="8.5" height="3.4" fill="#b8b8b8"/>
<rect x="210.4" y="533.1" width="6.2" height="3.2" fill="#b8b8b8"/>
<rect x="241.6" y="546.7" width="6.4" height="3.4" fill="#c8c8c8"/>
<rect x="287.7" y="532.9" width="8.4" height="3.2" fill="#d8d8d8"/>
<rect x="231.9" y="546.9" width="10.8" height="3.5" fill="#c8c8c8"/>
<rect x="254.0" y="538.3" width="9.3" height="3.6" fill="#b8b8b8"/>
<rect x="212.4" y="538.6" width="8.6" height="4.2" fill="#c8c8c8"/>
<rect x="209.2" y="542.9" width="11.8" height="5.4" fill="#c8c8c8"/>
<rect x="198.9" y="526.2" width="5.3" height="5.5" fill="#c8c8c8"/>
<rect x="232.0" y="536.2" width="8.2" height="5.5" fill="#b8b8b8"/>
<rect x="256.7" y="541.8" width="7.7" height="4.1" fill="#d8d8d8"/>
<rect x="236.6" y="544.9" width="5.2" height="4.9" fill="#b8b8b8"/>
<rect x="239.2" y="533.2" width="10.7" height="5.5" fill="#b8b8b8"/>
<rect x="233.0" y="542.9" width="5.5" height="4.1" fill="#b8b8b8"/>
<rect x="203.7" y="529.5" width="5.3" height="4.9" fill="#c8c8c8"/>
<rect x="282.6" y="549.5" width="7.2" height="5.2" fill="#c8c8c8"/>
<rect x="200.2" y="529.9" width="11.7" height="3.4" fill="#c8c8c8"/>
<rect x="289.6" y="547.8" width="10.1" height="5.4" fill="#c8c8c8"/>
<rect x="207.5" y="540.4" width="10.7" height="5.4" fill="#d8d8d8"/>
<rect x="269.9" y="542.0" width="11.5" height="3.2" fill="#b8b8b8"/>
<rect x="253.0" y="542.9" width="9.3" height="5.7" fill="#b8b8b8"/>
<rect x="208.6" y="542.2" width="8.5" height="5.8" fill="#c8c8c8"/>
<rect x="251.2" y="539.4" width="7.6" height="3.6" fill="#b8b8b8"/>
<rect x="210.3" y="534.2" width="11.6" height="5.0" fill="#b8b8b8"/>
<rect x="211.0" y="537.8" width="8.7" height="4.9" fill="#b8b8b8"/>
<rect x="286.8" y="544.7" width="8.2" height="4.6" fill="#d8d8d8"/>
<rect x="278.8" y="561.4" width="9.4" height="4.2" fill="#b8b8b8"/>
<rect x="220.2" y="550.0" width="11.9" height="4.7" fill="#b8b8b8"/>
<rect x="226.4" y="543.1" width="9.3" height="5.9" fill="#b8b8b8"/>
<rect x="272.9" y="547.8" width="6.8" height="4.9" fill="#d8d8d8"/>
<rect x="283.2" y="554.8" width="10.2" height="3.7" fill="#b8b8b8"/>
<rect x="253.5" y="537.1" width="8.0" height="4.5" fill="#c8c8c8"/>
</g>
<g shape-rendering="crispEdges">
<rect x="196.3" y="469.7" width="2.1" height="1.0" fill="#d0d0d0"/>
<rect x="222.8" y="475.0" width="3.6" height="2.1" fill="#c0c0c0"/>
<rect x="265.9" y="470.8" width="3.9" height="1.9" fill="#e0e0e0"/>
<rect x="178.2" y="467.0" width="4.4" height="2.4" fill="#c0c0c0"/>
<rect x="190.8" y="464.6" width="4.3" height="1.8" fill="#d0d0d0"/>
<rect x="324.9" y="470.8" width="2.2" height="2.6" fill="#d0d0d0"/>
<rect x="267.6" y="468.9" width="3.6" height="2.0" fill="#e0e0e0"/>
<rect x="315.1" y="473.2" width="2.1" height="2.1" fill="#c0c0c0"/>
<rect x="204.6" y="473.3" width="2.3" height="2.2" fill="#e0e0e0"/>
<rect x="197.9" y="475.1" width="2.6" height="2.2" fill="#b8b8b8"/>
<rect x="275.7" y="469.4" width="3.5" height="1.1" fill="#f0f0f0"/>
<rect x="329.1" y="478.2" width="4.2" height="2.0" fill="#b8b8b8"/>
<rect x="177.0" y="471.0" width="3.4" height="2.5" fill="#c0c0c0"/>
<rect x="203.0" y="465.0" width="5.0" height="1.5" fill="#f0f0f0"/>
<rect x="195.0" y="474.6" width="4.8" height="1.5" fill="#f0f0f0"/>
<rect x="217.0" y="465.5" width="3.7" height="1.9" fill="#b8b8b8"/>
<rect x="325.7" y="473.7" width="4.7" height="1.2" fill="#b8b8b8"/>
<rect x="178.3" y="475.2" width="2.8" height="1.5" fill="#e0e0e0"/>
<rect x="321.5" y="475.5" width="4.6" height="1.7" fill="#e0e0e0"/>
<rect x="234.4" y="468.2" width="4.6" height="2.8" fill="#b8b8b8"/>
<rect x="248.3" y="474.4" width="4.6" height="1.9" fill="#e0e0e0"/>
<rect x="263.8" y="468.4" width="2.9" height="1.4" fill="#b8b8b8"/>
<rect x="266.1" y="470.9" width="2.1" height="1.2" fill="#b8b8b8"/>
<rect x="319.1" y="474.6" width="3.0" height="1.3" fill="#f0f0f0"/>
<rect x="180.8" y="471.2" width="2.1" height="1.1" fill="#f0f0f0"/>
<rect x="186.1" y="472.0" width="3.8" height="1.7" fill="#b8b8b8"/>
<rect x="313.3" y="481.0" width="4.7" height="2.9" fill="#f0f0f0"/>
<rect x="214.0" y="472.6" width="2.6" height="1.1" fill="#f0f0f0"/>
<rect x="303.1" y="472.8" width="2.3" height="1.2" fill="#e0e0e0"/>
<rect x="221.3" y="468.4" width="3.0" height="1.5" fill="#d0d0d0"/>
<rect x="215.5" y="469.0" width="3.1" height="1.6" fill="#b8b8b8"/>
<rect x="253.6" y="477.0" width="4.6" height="2.2" fill="#f0f0f0"/>
<rect x="297.5" y="478.1" width="2.3" height="1.9" fill="#f0f0f0"/>
<rect x="258.8" y="473.1" width="2.6" height="2.7" fill="#f0f0f0"/>
<rect x="264.5" y="471.8" width="3.6" height="1.6" fill="#f0f0f0"/>
<rect x="176.7" y="471.4" width="3.5" height="2.0" fill="#e0e0e0"/>
<rect x="324.9" y="469.0" width="3.5" height="2.2" fill="#e0e0e0"/>
<rect x="219.7" y="465.9" width="2.6" height="2.4" fill="#c0c0c0"/>
<rect x="201.5" y="474.4" width="3.5" height="3.0" fill="#b8b8b8"/>
<rect x="297.2" y="472.2" width="3.9" height="1.7" fill="#c0c0c0"/>
<rect x="319.0" y="479.5" width="3.3" height="2.3" fill="#d0d0d0"/>
<rect x="207.7" y="466.3" width="2.8" height="2.8" fill="#b8b8b8"/>
<rect x="202.4" y="473.9" width="4.8" height="1.3" fill="#b8b8b8"/>
<rect x="292.2" y="473.5" width="4.3" height="2.3" fill="#d0d0d0"/>
<rect x="265.6" y="466.3" width="3.4" height="2.1" fill="#d0d0d0"/>
<rect x="202.1" y="468.5" width="3.3" height="2.5" fill="#b8b8b8"/>
<rect x="211.6" y="467.5" width="4.1" height="2.0" fill="#d0d0d0"/>
<rect x="222.4" y="474.4" width="4.1" height="2.7" fill="#e0e0e0"/>
<rect x="287.4" y="478.9" width="3.8" height="1.7" fill="#e0e0e0"/>
<rect x="226.5" y="469.8" width="2.6" height="3.0" fill="#f0f0f0"/>
<rect x="201.3" y="468.2" width="2.5" height="1.3" fill="#d0d0d0"/>
<rect x="288.9" y="472.1" width="3.3" height="1.4" fill="#f0f0f0"/>
<rect x="219.2" y="472.9" width="2.0" height="2.7" fill="#c0c0c0"/>
<rect x="282.8" y="471.2" width="3.5" height="2.3" fill="#c0c0c0"/>
<rect x="179.4" y="467.9" width="2.0" height="1.5" fill="#c0c0c0"/>
<rect x="284.0" y="478.8" width="3.8" height="2.3" fill="#e0e0e0"/>
<rect x="278.9" y="469.6" width="3.9" height="2.2" fill="#e0e0e0"/>
<rect x="280.7" y="468.1" width="3.9" height="1.9" fill="#d0d0d0"/>
<rect x="216.0" y="468.0" width="2.7" height="1.8" fill="#e0e0e0"/>
<rect x="214.5" y="463.5" width="3.3" height="1.9" fill="#b8b8b8"/>
<rect x="308.2" y="470.2" width="4.6" height="2.8" fill="#d0d0d0"/>
<rect x="295.8" y="473.7" width="3.2" height="2.0" fill="#f0f0f0"/>
<rect x="181.9" y="466.5" width="4.3" height="2.9" fill="#b8b8b8"/>
<rect x="229.6" y="470.3" width="4.5" height="1.9" fill="#e0e0e0"/>
<rect x="286.5" y="469.2" width="4.5" height="2.0" fill="#c0c0c0"/>
<rect x="290.3" y="473.6" width="3.4" height="3.0" fill="#e0e0e0"/>
<rect x="236.4" y="471.3" width="5.0" height="1.7" fill="#f0f0f0"/>
<rect x="214.9" y="468.4" width="3.1" height="1.1" fill="#f0f0f0"/>
<rect x="240.5" y="467.0" width="3.1" height="1.5" fill="#e0e0e0"/>
<rect x="222.7" y="472.8" width="3.2" height="2.9" fill="#e0e0e0"/>
<rect x="329.1" y="479.4" width="2.5" height="2.9" fill="#f0f0f0"/>
<rect x="300.7" y="473.6" width="3.9" height="1.9" fill="#b8b8b8"/>
<rect x="287.0" y="474.5" width="4.0" height="2.7" fill="#c0c0c0"/>
<rect x="248.1" y="470.1" width="2.9" height="2.1" fill="#e0e0e0"/>
<rect x="296.1" y="468.7" width="2.7" height="2.4" fill="#d0d0d0"/>
<rect x="327.4" y="476.9" width="4.0" height="2.0" fill="#d0d0d0"/>
<rect x="231.1" y="469.3" width="3.5" height="2.2" fill="#f0f0f0"/>
<rect x="277.5" y="471.0" width="3.1" height="2.9" fill="#c0c0c0"/>
<rect x="184.8" y="471.7" width="4.4" height="1.3" fill="#d0d0d0"/>
<rect x="273.5" y="466.9" width="2.0" height="1.0" fill="#f0f0f0"/>
<rect x="277.0" y="473.2" width="2.4" height="1.5" fill="#c0c0c0"/>
<rect x="229.4" y="472.3" width="2.5" height="2.8" fill="#b8b8b8"/>
<rect x="201.9" y="472.7" width="4.3" height="2.3" fill="#b8b8b8"/>
<rect x="297.4" y="471.5" width="4.5" height="1.4" fill="#e0e0e0"/>
<rect x="257.7" y="472.1" width="4.6" height="2.1" fill="#d0d0d0"/>
<rect x="240.5" y="467.9" width="4.5" height="1.9" fill="#b8b8b8"/>
<rect x="185.0" y="466.7" width="3.5" height="2.0" fill="#b8b8b8"/>
<rect x="268.3" y="473.2" width="4.2" height="1.3" fill="#d0d0d0"/>
<rect x="248.1" y="467.4" width="4.5" height="1.7" fill="#c0c0c0"/>
<rect x="330.0" y="474.2" width="4.0" height="1.4" fill="#d0d0d0"/>
<rect x="274.0" y="477.4" width="4.0" height="2.9" fill="#d0d0d0"/>
<rect x="300.5" y="475.3" width="2.3" height="2.0" fill="#e0e0e0"/>
<rect x="181.2" y="467.4" width="3.0" height="2.7" fill="#d0d0d0"/>
<rect x="228.6" y="466.3" width="4.3" height="2.1" fill="#e0e0e0"/>
<rect x="219.8" y="468.9" width="2.2" height="1.6" fill="#d0d0d0"/>
<rect x="398.4" y="489.8" width="3.2" height="2.0" fill="#d0d0d0"/>
<rect x="404.6" y="487.3" width="3.5" height="1.2" fill="#e0e0e0"/>
<rect x="328.4" y="483.5" width="2.9" height="2.2" fill="#f0f0f0"/>
<rect x="392.4" y="492.1" width="4.7" height="2.1" fill="#f0f0f0"/>
<rect x="339.6" y="484.0" width="2.3" height="1.1" fill="#c0c0c0"/>
<rect x="368.4" y="482.4" width="4.7" height="2.2" fill="#b8b8b8"/>
<rect x="305.1" y="475.3" width="4.0" height="2.4" fill="#f0f0f0"/>
<rect x="314.1" y="478.9" width="4.3" height="1.2" fill="#e0e0e0"/>
<rect x="404.1" y="485.6" width="3.3" height="1.2" fill="#f0f0f0"/>
<rect x="335.5" y="484.7" width="3.7" height="1.5" fill="#d0d0d0"/>
<rect x="310.3" y="475.5" width="2.1" height="1.0" fill="#b8b8b8"/>
<rect x="372.9" y="486.6" width="3.7" height="1.1" fill="#f0f0f0"/>
<rect x="391.0" y="486.9" width="3.3" height="2.4" fill="#c0c0c0"/>
<rect x="346.2" y="486.3" width="3.8" height="2.9" fill="#e0e0e0"/>
<rect x="350.1" y="484.0" width="3.2" height="1.2" fill="#c0c0c0"/>
<rect x="314.1" y="480.9" width="2.0" height="2.4" fill="#f0f0f0"/>
<rect x="420.2" y="490.3" width="4.6" height="1.4" fill="#f0f0f0"/>
<rect x="302.7" y="484.3" width="2.7" height="2.5" fill="#e0e0e0"/>
<rect x="411.4" y="489.6" width="3.1" height="2.5" fill="#e0e0e0"/>
<rect x="385.0" y="490.4" width="4.1" height="1.9" fill="#d0d0d0"/>
<rect x="410.2" y="491.1" width="2.2" height="1.1" fill="#f0f0f0"/>
<rect x="287.0" y="474.9" width="2.2" height="1.6" fill="#b8b8b8"/>
<rect x="307.7" y="475.5" width="4.6" height="2.0" fill="#f0f0f0"/>
<rect x="328.3" y="486.4" width="3.4" height="1.3" fill="#f0f0f0"/>
<rect x="334.8" y="480.8" width="3.9" height="2.3" fill="#c0c0c0"/>
<rect x="350.3" y="484.3" width="2.8" height="2.5" fill="#d0d0d0"/>
<rect x="325.1" y="478.3" width="2.2" height="2.9" fill="#b8b8b8"/>
<rect x="330.5" y="475.5" width="4.5" height="2.2" fill="#d0d0d0"/>
<rect x="365.1" y="479.9" width="4.9" height="1.5" fill="#c0c0c0"/>
<rect x="378.8" y="481.1" width="4.4" height="1.6" fill="#f0f0f0"/>
<rect x="329.0" y="478.0" width="2.8" height="1.3" fill="#f0f0f0"/>
<rect x="324.5" y="485.5" width="5.0" height="1.3" fill="#b8b8b8"/>
<rect x="378.8" y="491.1" width="4.7" height="1.7" fill="#f0f0f0"/>
<rect x="359.0" y="481.6" width="4.4" height="2.4" fill="#e0e0e0"/>
<rect x="327.4" y="482.0" width="2.2" height="1.8" fill="#e0e0e0"/>
<rect x="411.9" y="488.8" width="3.2" height="2.1" fill="#b8b8b8"/>
<rect x="395.5" y="487.5" width="4.3" height="1.5" fill="#b8b8b8"/>
<rect x="356.4" y="483.9" width="3.0" height="2.0" fill="#e0e0e0"/>
<rect x="310.9" y="485.9" width="2.6" height="1.4" fill="#d0d0d0"/>
<rect x="334.7" y="479.6" width="3.6" height="1.3" fill="#f0f0f0"/>
<rect x="411.4" y="487.9" width="3.5" height="2.7" fill="#d0d0d0"/>
<rect x="371.7" y="486.0" width="3.8" height="1.7" fill="#b8b8b8"/>
<rect x="368.2" y="483.6" width="2.3" height="1.4" fill="#b8b8b8"/>
<rect x="351.6" y="481.7" width="4.3" height="1.9" fill="#c0c0c0"/>
<rect x="390.1" y="486.2" width="4.5" height="2.9" fill="#d0d0d0"/>
<rect x="400.6" y="483.0" width="3.1" height="1.1" fill="#f0f0f0"/>
<rect x="361.4" y="492.9" width="4.6" height="1.9" fill="#f0f0f0"/>
<rect x="403.2" y="484.0" width="4.1" height="1.2" fill="#d0d0d0"/>
<rect x="362.3" y="479.6" width="3.9" height="2.9" fill="#b8b8b8"/>
<rect x="338.9" y="481.0" width="4.9" height="3.0" fill="#e0e0e0"/>
<rect x="308.6" y="480.6" width="4.8" height="2.9" fill="#f0f0f0"/>
<rect x="408.7" y="493.6" width="2.1" height="2.6" fill="#c0c0c0"/>
<rect x="292.6" y="475.4" width="2.4" height="2.5" fill="#e0e0e0"/>
<rect x="377.7" y="484.9" width="4.3" height="1.2" fill="#d0d0d0"/>
<rect x="335.9" y="486.3" width="3.2" height="1.7" fill="#c0c0c0"/>
<rect x="308.1" y="480.1" width="4.0" height="1.0" fill="#e0e0e0"/>
<rect x="394.4" y="489.2" width="2.5" height="2.7" fill="#f0f0f0"/>
<rect x="413.0" y="493.4" width="2.4" height="1.9" fill="#f0f0f0"/>
<rect x="411.9" y="484.4" width="3.2" height="1.0" fill="#f0f0f0"/>
<rect x="347.0" y="480.4" width="3.4" height="2.3" fill="#e0e0e0"/>
<rect x="330.5" y="486.7" width="4.2" height="1.4" fill="#c0c0c0"/>
<rect x="360.8" y="488.4" width="2.8" height="1.8" fill="#e0e0e0"/>
<rect x="288.5" y="483.1" width="3.7" height="1.6" fill="#e0e0e0"/>
<rect x="320.7" y="483.7" width="3.4" height="1.3" fill="#b8b8b8"/>
<rect x="292.8" y="480.8" width="4.7" height="2.3" fill="#e0e0e0"/>
<rect x="361.7" y="485.5" width="4.3" height="2.9" fill="#c0c0c0"/>
<rect x="420.8" y="488.6" width="5.0" height="2.9" fill="#f0f0f0"/>
<rect x="338.4" y="481.1" width="4.5" height="3.0" fill="#e0e0e0"/>
<rect x="419.1" y="490.6" width="2.0" height="2.6" fill="#d0d0d0"/>
<rect x="355.0" y="479.2" width="4.8" height="1.6" fill="#d0d0d0"/>
<rect x="344.6" y="485.1" width="4.7" height="1.4" fill="#b8b8b8"/>
<rect x="309.8" y="482.2" width="2.7" height="1.4" fill="#b8b8b8"/>
<rect x="295.9" y="475.9" width="2.3" height="2.2" fill="#c0c0c0"/>
<rect x="389.3" y="487.9" width="4.0" height="2.3" fill="#e0e0e0"/>
<rect x="364.9" y="486.4" width="2.6" height="1.1" fill="#b8b8b8"/>
<rect x="340.9" y="482.7" width="4.4" height="1.7" fill="#c0c0c0"/>
<rect x="297.4" y="478.1" width="3.2" height="2.5" fill="#e0e0e0"/>
<rect x="404.5" y="488.3" width="4.5" height="1.7" fill="#e0e0e0"/>
<rect x="381.2" y="488.3" width="3.7" height="2.7" fill="#d0d0d0"/>
<rect x="356.2" y="480.8" width="2.4" height="2.4" fill="#d0d0d0"/>
<rect x="391.7" y="488.6" width="4.6" height="2.2" fill="#f0f0f0"/>
<rect x="324.9" y="485.3" width="3.3" height="1.1" fill="#b8b8b8"/>
<rect x="303.4" y="482.7" width="2.7" height="1.2" fill="#b8b8b8"/>
<rect x="310.0" y="482.0" width="4.5" height="1.1" fill="#f0f0f0"/>
<rect x="411.9" y="490.5" width="4.2" height="1.5" fill="#b8b8b8"/>
<rect x="372.2" y="483.5" width="3.3" height="1.7" fill="#f0f0f0"/>
<rect x="383.2" y="487.1" width="2.1" height="1.2" fill="#c0c0c0"/>
<rect x="365.3" y="485.1" width="2.4" height="2.8" fill="#b8b8b8"/>
<rect x="366.1" y="483.7" width="4.6" height="1.3" fill="#b8b8b8"/>
<rect x="348.3" y="477.7" width="2.1" height="2.3" fill="#c0c0c0"/>
<rect x="366.8" y="489.6" width="3.8" height="1.1" fill="#f0f0f0"/>
<rect x="391.4" y="486.1" width="3.0" height="1.9" fill="#b8b8b8"/>
<rect x="395.2" y="489.5" width="4.7" height="2.6" fill="#b8b8b8"/>
<rect x="292.3" y="471.1" width="4.8" height="1.5" fill="#c0c0c0"/>
<rect x="375.8" y="485.1" width="2.0" height="1.2" fill="#e0e0e0"/>
<rect x="294.5" y="475.6" width="2.1" height="1.3" fill="#c0c0c0"/>
<rect x="391.4" y="488.8" width="4.8" height="2.3" fill="#f0f0f0"/>
<rect x="289.7" y="476.9" width="4.0" height="1.5" fill="#b8b8b8"/>
<rect x="395.5" y="485.8" width="2.1" height="1.2" fill="#f0f0f0"/>
<rect x="356.3" y="477.5" width="2.9" height="1.6" fill="#e0e0e0"/>
<rect x="197.0" y="511.5" width="3.8" height="2.9" fill="#d0d0d0"/>
<rect x="193.4" y="503.0" width="3.3" height="2.0" fill="#d0d0d0"/>
<rect x="276.6" y="510.0" width="3.7" height="1.5" fill="#f0f0f0"/>
<rect x="259.0" y="511.7" width="4.1" height="1.4" fill="#c0c0c0"/>
<rect x="205.1" y="512.2" width="4.1" height="1.9" fill="#d0d0d0"/>
<rect x="246.3" y="509.3" width="2.7" height="1.4" fill="#c0c0c0"/>
<rect x="282.0" y="514.3" width="3.2" height="2.8" fill="#e0e0e0"/>
<rect x="271.2" y="513.4" width="3.5" height="1.6" fill="#e0e0e0"/>
<rect x="214.6" y="513.3" width="4.3" height="1.3" fill="#f0f0f0"/>
<rect x="245.6" y="509.3" width="3.6" height="2.7" fill="#d0d0d0"/>
<rect x="258.5" y="515.8" width="2.3" height="1.5" fill="#e0e0e0"/>
<rect x="226.7" y="509.7" width="2.6" height="2.2" fill="#d0d0d0"/>
<rect x="267.1" y="511.6" width="3.6" height="2.5" fill="#c0c0c0"/>
<rect x="211.9" y="506.9" width="4.1" height="1.8" fill="#f0f0f0"/>
<rect x="185.4" y="505.1" width="4.3" height="2.2" fill="#c0c0c0"/>
<rect x="224.7" y="512.0" width="4.5" height="1.6" fill="#f0f0f0"/>
<rect x="223.0" y="510.2" width="3.4" height="1.9" fill="#d0d0d0"/>
<rect x="214.3" y="507.0" width="3.2" height="1.6" fill="#c0c0c0"/>
<rect x="223.1" y="512.5" width="2.9" height="2.1" fill="#e0e0e0"/>
<rect x="228.6" y="509.2" width="4.5" height="1.7" fill="#e0e0e0"/>
<rect x="280.9" y="515.2" width="2.6" height="1.9" fill="#f0f0f0"/>
<rect x="187.6" y="507.9" width="2.9" height="2.1" fill="#d0d0d0"/>
<rect x="238.8" y="517.2" width="5.0" height="2.0" fill="#c0c0c0"/>
<rect x="224.0" y="508.0" width="3.1" height="2.9" fill="#f0f0f0"/>
<rect x="237.5" y="514.1" width="2.3" height="1.7" fill="#c0c0c0"/>
<rect x="249.9" y="513.4" width="2.6" height="1.8" fill="#c0c0c0"/>
<rect x="229.0" y="509.9" width="3.9" height="3.0" fill="#d0d0d0"/>
<rect x="254.2" y="512.1" width="3.1" height="1.7" fill="#f0f0f0"/>
<rect x="267.6" y="511.7" width="3.5" height="1.2" fill="#d0d0d0"/>
<rect x="254.0" y="515.8" width="4.7" height="1.8" fill="#e0e0e0"/>
<rect x="237.4" y="503.4" width="4.4" height="1.4" fill="#e0e0e0"/>
<rect x="226.2" y="513.8" width="2.3" height="2.1" fill="#f0f0f0"/>
<rect x="254.2" y="513.5" width="2.0" height="1.0" fill="#f0f0f0"/>
<rect x="276.7" y="512.5" width="2.0" height="1.1" fill="#e0e0e0"/>
<rect x="234.8" y="511.8" width="3.7" height="1.5" fill="#e0e0e0"/>
<rect x="242.4" y="510.2" width="2.5" height="2.5" fill="#f0f0f0"/>
<rect x="187.9" y="508.9" width="2.2" height="2.9" fill="#c0c0c0"/>
<rect x="267.3" y="509.1" width="2.2" height="1.0" fill="#d0d0d0"/>
<rect x="199.4" y="505.6" width="2.7" height="1.6" fill="#f0f0f0"/>
<rect x="211.7" y="514.5" width="3.7" height="1.7" fill="#c0c0c0"/>
<rect x="247.4" y="515.3" width="2.1" height="1.4" fill="#c0c0c0"/>
<rect x="243.3" y="514.4" width="3.9" height="1.5" fill="#f0f0f0"/>
<rect x="200.9" y="508.2" width="3.8" height="1.3" fill="#f0f0f0"/>
<rect x="274.9" y="514.4" width="3.8" height="2.9" fill="#c0c0c0"/>
<rect x="283.0" y="511.7" width="2.2" height="2.4" fill="#e0e0e0"/>
<rect x="226.3" y="506.9" width="2.1" height="2.7" fill="#f0f0f0"/>
<rect x="202.3" y="511.7" width="3.1" height="1.4" fill="#d0d0d0"/>
<rect x="224.6" y="508.7" width="4.6" height="1.7" fill="#f0f0f0"/>
<rect x="281.1" y="515.7" width="3.3" height="2.8" fill="#e0e0e0"/>
<rect x="223.7" y="507.8" width="3.3" height="1.6" fill="#f0f0f0"/>
<rect x="219.1" y="510.6" width="2.5" height="2.4" fill="#f0f0f0"/>
<rect x="204.6" y="504.4" width="3.7" height="1.9" fill="#e0e0e0"/>
<rect x="200.9" y="507.6" width="3.1" height="2.4" fill="#c0c0c0"/>
<rect x="247.9" y="509.7" width="3.4" height="1.4" fill="#c0c0c0"/>
<rect x="252.5" y="510.9" width="4.8" height="3.0" fill="#c0c0c0"/>
<rect x="243.8" y="510.1" width="3.8" height="1.4" fill="#f0f0f0"/>
<rect x="252.8" y="513.6" width="2.3" height="2.7" fill="#c0c0c0"/>
<rect x="187.9" y="507.9" width="2.0" height="2.4" fill="#e0e0e0"/>
<rect x="262.6" y="511.1" width="2.7" height="1.4" fill="#f0f0f0"/>
<rect x="191.8" y="512.7" width="4.3" height="1.4" fill="#d0d0d0"/>
<rect x="203.4" y="531.5" width="2.9" height="2.6" fill="#b0b0b0"/>
<rect x="221.8" y="528.6" width="4.3" height="2.8" fill="#d0d0d0"/>
<rect x="284.0" y="554.7" width="2.5" height="1.7" fill="#c0c0c0"/>
<rect x="280.2" y="556.0" width="3.4" height="3.0" fill="#b0b0b0"/>
<rect x="228.5" y="541.7" width="3.9" height="1.4" fill="#e0e0e0"/>
<rect x="220.7" y="536.0" width="4.0" height="1.8" fill="#d0d0d0"/>
<rect x="235.9" y="538.5" width="4.3" height="1.3" fill="#e0e0e0"/>
<rect x="247.5" y="532.8" width="3.7" height="1.5" fill="#b0b0b0"/>
<rect x="263.1" y="534.2" width="2.8" height="1.9" fill="#c0c0c0"/>
<rect x="283.9" y="555.0" width="4.0" height="2.8" fill="#e0e0e0"/>
<rect x="287.5" y="554.3" width="4.0" height="1.1" fill="#c0c0c0"/>
<rect x="215.0" y="547.1" width="2.3" height="2.4" fill="#b0b0b0"/>
<rect x="289.8" y="542.9" width="3.8" height="1.4" fill="#e0e0e0"/>
<rect x="228.2" y="546.4" width="3.0" height="2.0" fill="#b0b0b0"/>
<rect x="243.3" y="540.1" width="4.0" height="1.4" fill="#d0d0d0"/>
<rect x="241.5" y="547.4" width="4.5" height="2.1" fill="#d0d0d0"/>
<rect x="246.9" y="556.3" width="4.9" height="2.3" fill="#c0c0c0"/>
<rect x="218.7" y="544.3" width="3.2" height="1.4" fill="#c0c0c0"/>
<rect x="208.0" y="539.7" width="4.1" height="2.0" fill="#b0b0b0"/>
<rect x="217.6" y="539.2" width="3.3" height="2.9" fill="#c0c0c0"/>
<rect x="261.3" y="551.6" width="2.4" height="2.4" fill="#d0d0d0"/>
<rect x="226.7" y="543.0" width="4.3" height="1.3" fill="#d0d0d0"/>
<rect x="251.9" y="536.2" width="3.4" height="2.5" fill="#d0d0d0"/>
<rect x="205.9" y="536.0" width="2.6" height="1.1" fill="#c0c0c0"/>
<rect x="223.9" y="545.1" width="2.3" height="1.6" fill="#e0e0e0"/>
<rect x="210.3" y="530.6" width="2.9" height="2.1" fill="#e0e0e0"/>
<rect x="196.0" y="538.8" width="5.0" height="2.5" fill="#e0e0e0"/>
<rect x="266.0" y="540.1" width="2.8" height="2.3" fill="#b0b0b0"/>
<rect x="241.4" y="550.4" width="4.4" height="1.6" fill="#c0c0c0"/>
<rect x="282.4" y="541.8" width="4.8" height="2.3" fill="#c0c0c0"/>
<rect x="257.0" y="537.2" width="2.2" height="2.5" fill="#e0e0e0"/>
<rect x="268.6" y="548.0" width="2.6" height="2.3" fill="#d0d0d0"/>
<rect x="204.7" y="533.0" width="4.2" height="1.6" fill="#c0c0c0"/>
<rect x="231.0" y="537.2" width="2.7" height="1.3" fill="#c0c0c0"/>
<rect x="274.6" y="541.6" width="2.8" height="1.1" fill="#e0e0e0"/>
<rect x="248.9" y="535.1" width="4.1" height="2.8" fill="#d0d0d0"/>
<rect x="242.0" y="533.9" width="3.5" height="1.3" fill="#c0c0c0"/>
<rect x="252.2" y="540.9" width="2.7" height="1.3" fill="#b0b0b0"/>
<rect x="203.5" y="534.7" width="2.1" height="1.9" fill="#d0d0d0"/>
<rect x="215.7" y="537.6" width="3.8" height="2.7" fill="#b0b0b0"/>
<rect x="208.6" y="538.8" width="2.2" height="1.1" fill="#b0b0b0"/>
<rect x="279.6" y="547.4" width="4.9" height="1.4" fill="#d0d0d0"/>
<rect x="231.0" y="540.9" width="2.0" height="2.6" fill="#c0c0c0"/>
<rect x="248.9" y="535.4" width="3.6" height="1.9" fill="#d0d0d0"/>
<rect x="287.6" y="549.2" width="4.9" height="2.2" fill="#e0e0e0"/>
<rect x="263.7" y="540.4" width="3.7" height="1.8" fill="#c0c0c0"/>
<rect x="240.7" y="549.4" width="3.9" height="1.6" fill="#c0c0c0"/>
<rect x="245.4" y="534.6" width="2.7" height="2.5" fill="#e0e0e0"/>
<rect x="209.0" y="529.1" width="3.7" height="2.1" fill="#b0b0b0"/>
<rect x="229.2" y="540.7" width="2.8" height="1.5" fill="#d0d0d0"/>
<rect x="247.1" y="549.0" width="2.3" height="2.7" fill="#c0c0c0"/>
<rect x="256.7" y="547.2" width="4.1" height="1.5" fill="#b0b0b0"/>
<rect x="216.5" y="547.0" width="3.7" height="1.2" fill="#e0e0e0"/>
<rect x="275.9" y="541.6" width="2.4" height="2.0" fill="#e0e0e0"/>
<rect x="254.5" y="533.8" width="4.9" height="2.0" fill="#b0b0b0"/>
<rect x="273.9" y="543.1" width="4.9" height="2.1" fill="#e0e0e0"/>
<rect x="208.0" y="540.0" width="4.3" height="1.1" fill="#d0d0d0"/>
<rect x="199.5" y="545.6" width="4.9" height="1.9" fill="#e0e0e0"/>
<rect x="262.2" y="546.9" width="3.3" height="2.8" fill="#d0d0d0"/>
<rect x="248.5" y="553.3" width="2.5" height="2.5" fill="#c0c0c0"/>
<rect x="342.1" y="512.1" width="3.5" height="2.0" fill="#d8d8d8"/>
<rect x="331.8" y="497.9" width="3.9" height="2.7" fill="#c8c8c8"/>
<rect x="342.2" y="521.0" width="2.7" height="2.4" fill="#d8d8d8"/>
<rect x="342.0" y="523.0" width="3.4" height="2.3" fill="#c8c8c8"/>
<rect x="340.4" y="519.8" width="2.0" height="3.0" fill="#d8d8d8"/>
<rect x="331.7" y="504.2" width="3.6" height="2.2" fill="#d8d8d8"/>
<rect x="343.1" y="517.7" width="3.3" height="2.8" fill="#d8d8d8"/>
<rect x="338.1" y="508.1" width="3.9" height="2.0" fill="#d8d8d8"/>
<rect x="344.9" y="513.1" width="3.0" height="2.5" fill="#c8c8c8"/>
<rect x="342.0" y="518.5" width="3.6" height="2.7" fill="#d8d8d8"/>
<rect x="342.6" y="517.4" width="3.9" height="2.7" fill="#d8d8d8"/>
<rect x="335.9" y="511.7" width="2.2" height="2.3" fill="#c8c8c8"/>
<rect x="334.7" y="502.3" width="2.3" height="2.6" fill="#c8c8c8"/>
<rect x="332.5" y="500.5" width="3.2" height="2.4" fill="#d8d8d8"/>
<rect x="379.7" y="535.1" width="2.7" height="2.5" fill="#b8b8b8"/>
<rect x="375.3" y="521.7" width="2.1" height="2.1" fill="#b8b8b8"/>
<rect x="379.1" y="534.4" width="2.5" height="2.5" fill="#c8c8c8"/>
<rect x="380.4" y="529.3" width="2.3" height="2.7" fill="#b8b8b8"/>
<rect x="388.1" y="535.2" width="3.5" height="2.6" fill="#b8b8b8"/>
<rect x="380.4" y="531.8" width="3.7" height="2.9" fill="#b8b8b8"/>
<rect x="379.6" y="537.7" width="3.5" height="2.7" fill="#b8b8b8"/>
<rect x="380.3" y="529.9" width="2.1" height="2.3" fill="#c8c8c8"/>
<rect x="388.3" y="536.1" width="3.6" height="2.5" fill="#b8b8b8"/>
<rect x="387.1" y="538.2" width="2.4" height="2.9" fill="#c8c8c8"/>
<rect x="381.1" y="533.2" width="2.8" height="2.8" fill="#b8b8b8"/>
<rect x="383.8" y="537.7" width="2.5" height="2.6" fill="#c8c8c8"/>
<rect x="376.1" y="534.3" width="2.4" height="2.9" fill="#b8b8b8"/>
<rect x="379.6" y="530.4" width="3.9" height="2.7" fill="#b8b8b8"/>
<rect x="196.1" y="485.7" width="2.6" height="1.4" fill="#a0a000"/>
<rect x="189.1" y="481.5" width="2.5" height="1.0" fill="#d0d000"/>
<rect x="185.6" y="476.2" width="2.4" height="2.2" fill="#e8e800"/>
<rect x="191.6" y="483.5" width="3.9" height="2.2" fill="#d0d000"/>
<rect x="177.8" y="483.1" width="3.6" height="2.2" fill="#e8e800"/>
<rect x="179.3" y="480.2" width="3.8" height="2.3" fill="#d0d000"/>
<rect x="181.1" y="482.7" width="2.7" height="2.5" fill="#e8e800"/>
<rect x="187.7" y="476.8" width="2.3" height="2.7" fill="#d0d000"/>
<rect x="178.1" y="475.1" width="3.2" height="2.6" fill="#e8e800"/>
<rect x="185.6" y="486.1" width="2.1" height="1.6" fill="#e8e800"/>
<rect x="199.7" y="481.7" width="2.1" height="2.2" fill="#e8e800"/>
<rect x="196.0" y="483.3" width="2.4" height="2.1" fill="#d0d000"/>
<rect x="184.6" y="480.6" width="2.7" height="1.7" fill="#e8e800"/>
<rect x="190.1" y="477.4" width="3.2" height="1.7" fill="#e8e800"/>
<rect x="280.4" y="474.2" width="2.7" height="2.2" fill="#d0d000"/>
<rect x="300.9" y="475.3" width="3.0" height="2.2" fill="#a0a000"/>
<rect x="247.0" y="480.0" width="2.3" height="1.9" fill="#a0a000"/>
<rect x="201.2" y="464.3" width="2.7" height="2.0" fill="#d0d000"/>
<rect x="252.1" y="474.9" width="3.0" height="2.9" fill="#d0d000"/>
<rect x="215.9" y="468.6" width="2.7" height="1.9" fill="#a0a000"/>
<rect x="295.9" y="476.6" width="2.9" height="2.8" fill="#d0d000"/>
<rect x="268.7" y="471.6" width="2.2" height="2.8" fill="#d0d000"/>
<rect x="282.7" y="481.4" width="2.0" height="2.7" fill="#a0a000"/>
<rect x="227.6" y="472.4" width="2.5" height="1.5" fill="#a0a000"/>
<rect x="287.6" y="475.8" width="2.0" height="1.8" fill="#a0a000"/>
<rect x="253.3" y="482.5" width="2.4" height="1.8" fill="#a0a000"/>
<rect x="202.7" y="465.5" width="2.6" height="1.9" fill="#a0a000"/>
<rect x="226.4" y="472.4" width="1.9" height="3.0" fill="#d0d000"/>
<rect x="417.8" y="485.6" width="2.7" height="2.2" fill="#a0a000"/>
<rect x="414.5" y="491.3" width="1.6" height="1.5" fill="#d0d000"/>
<rect x="319.4" y="485.2" width="2.5" height="2.4" fill="#a0a000"/>
<rect x="325.4" y="488.7" width="2.8" height="2.6" fill="#d0d000"/>
<rect x="393.6" y="489.9" width="2.8" height="1.8" fill="#d0d000"/>
<rect x="419.4" y="489.8" width="1.7" height="3.0" fill="#d0d000"/>
<rect x="316.0" y="483.7" width="2.0" height="2.3" fill="#a0a000"/>
<rect x="311.7" y="485.0" width="1.6" height="2.0" fill="#a0a000"/>
<rect x="250.8" y="517.6" width="4.0" height="1.5" fill="#d0d000"/>
<rect x="197.7" y="502.3" width="2.3" height="2.4" fill="#e8e800"/>
<rect x="215.6" y="505.5" width="2.2" height="1.5" fill="#a0a000"/>
<rect x="187.0" y="508.6" width="3.9" height="2.3" fill="#d0d000"/>
<rect x="196.0" y="508.9" width="3.4" height="1.7" fill="#e8e800"/>
<rect x="224.6" y="512.5" width="3.7" height="2.9" fill="#d0d000"/>
<rect x="209.3" y="504.7" width="2.4" height="3.0" fill="#d0d000"/>
<rect x="239.0" y="509.9" width="2.5" height="1.6" fill="#d0d000"/>
<rect x="197.3" y="505.2" width="2.1" height="2.7" fill="#a0a000"/>
<rect x="202.8" y="503.2" width="2.9" height="1.9" fill="#a0a000"/>
<rect x="235.8" y="510.7" width="4.0" height="2.8" fill="#e8e800"/>
<rect x="203.0" y="499.4" width="2.8" height="1.7" fill="#a0a000"/>
<rect x="250.8" y="514.7" width="3.6" height="2.8" fill="#e8e800"/>
<rect x="182.4" y="493.0" width="2.5" height="2.4" fill="#a0a000"/>
<rect x="259.3" y="508.1" width="3.7" height="2.5" fill="#d0d000"/>
<rect x="247.8" y="513.7" width="2.1" height="2.5" fill="#a0a000"/>
<rect x="235.4" y="501.0" width="2.9" height="2.5" fill="#a0a000"/>
<rect x="257.8" y="520.2" width="3.7" height="2.3" fill="#e8e800"/>
<rect x="224.6" y="507.7" width="2.8" height="2.7" fill="#e8e800"/>
<rect x="249.8" y="511.3" width="4.0" height="1.9" fill="#e8e800"/>
<rect x="234.8" y="510.6" width="2.6" height="2.4" fill="#e8e800"/>
<rect x="233.8" y="515.3" width="2.5" height="2.8" fill="#e8e800"/>
<rect x="266.5" y="547.1" width="2.1" height="2.1" fill="#d0d000"/>
<rect x="262.9" y="546.8" width="1.7" height="1.7" fill="#d0d000"/>
<rect x="265.1" y="545.5" width="1.7" height="2.3" fill="#d0d000"/>
<rect x="264.3" y="553.4" width="2.2" height="2.4" fill="#d0d000"/>
<rect x="181.500" y="498.300" width="5" height="4" fill="#c00000"/><rect x="186" y="479" width="2.500" height="2" fill="#b00000"/>
<rect x="264" y="364" width="3" height="4" fill="#d8d800"/>
</g>
<rect x="135" y="338" width="300" height="235" filter="url(#nz)" opacity="0.10"/>
<ellipse cx="232" cy="410" rx="34" ry="22" fill="#e0e0e0" opacity="0.7" filter="url(#b3)"/>
<ellipse cx="292" cy="402" rx="26" ry="8" fill="#e0e0e0" opacity="0.7" filter="url(#b3)"/>
<g shape-rendering="crispEdges">
<polygon points="204.5,390.4 208.6,389.3 212.7,393.4 219.8,394.0 226.0,392.4 230.1,391.9 243.4,392.4 246.5,395.5 251.6,397.5 255.2,399.6 253.7,403.7 260.8,403.2 267.0,405.2 274.7,407.8 267.0,410.4 261.9,411.9 256.7,415.0 252.6,416.5 249.6,419.1 248.5,423.2 246.5,427.3 240.3,428.8 232.1,431.4 223.9,431.9 217.8,429.8 211.6,429.3 203.4,428.8 198.3,428.3 196.3,420.1 199.3,412.9 200.4,405.7 198.3,400.6 200.4,395.5" fill="#c8c800"/>
<polygon points="205.5,394.0 211.6,395.5 219.8,394.5 230.1,394.0 242.4,394.5 246.5,397.5 248.5,404.7 252.6,406.8 260.8,407.8 256.7,410.4 252.6,413.4 248.5,416.0 246.5,420.1 245.5,425.2 240.3,427.3 231.1,429.3 223.9,430.3 217.8,428.3 211.6,427.8 202.4,427.3 198.3,426.2 197.8,421.1 200.4,415.0 201.9,406.8 200.4,400.6 201.9,395.5" fill="#e00000"/>
<polygon points="205.5,399.6 210.6,401.6 215.7,397.5 223.9,397.0 230.1,398.6 236.2,399.1 238.3,403.7 240.3,407.8 244.4,413.9 246.5,417.0 242.4,420.1 234.2,420.1 231.1,423.2 238.3,422.1 243.4,423.2 242.4,426.2 234.2,426.2 228.0,428.3 219.8,428.3 217.8,425.2 205.5,426.2 200.4,425.2 200.4,421.1 204.5,413.9 205.5,407.8" fill="#e000e0"/>
<polygon points="203.4,423.2 208.6,420.1 213.7,417.0 218.8,415.5 220.4,419.1 219.8,424.2 215.7,425.7 209.6,426.2 205.0,426.2" fill="#0090c0"/>
<polygon points="264.9,383.2 272.1,382.7 277.8,385.2 278.8,388.3 270.1,388.8" fill="#c8c800"/>
<polygon points="268.0,385.2 272.1,383.7 277.2,385.2 277.2,388.3 270.1,388.3" fill="#d00000"/>
<polygon points="270.1,385.2 274.2,385.0 274.7,386.8 271.1,387.1" fill="#e000e0"/>
<polygon points="288.0,398.4 296.7,398.1 300.8,399.1 308.0,398.4 316.2,400.6 309.0,403.2 302.9,405.7 290.6,407.3 284.9,405.2 289.5,402.7" fill="#d0d000"/>
<polygon points="292.6,402.7 299.8,399.1 308.0,400.1 308.0,402.2 301.8,405.2 291.6,405.5" fill="#d00000"/>
<polygon points="296.2,401.6 301.8,400.6 301.8,403.2 296.7,403.7" fill="#e000e0"/>
</g>
</g>
<path d="M43.5,176.6 L43.5,308.2 M32.4,220.4 L269.6,220.4 M152.5,176.6 L152.5,220.4 M137.4,220.4 L137.4,285.6 L136.6,286.4 L136.6,298.1 L81.5,298.1 L81.5,301.4 L56.2,301.4 L56.2,308.2 L32.4,308.2 M137.4,227.5 L184.6,227.5 L184.6,256.8 L187.5,259.4 L191.5,261.4 L194.5,260.2 L197.5,262.8 L201.6,263.8 L205.6,264.8 L210.7,264.2 L214.7,266.2 L218.7,268.9 L221.8,267.5 L226.8,269.5 L229.8,271.1 L232.9,268.3 L236.9,268.9 L242.0,271.1 L246.0,269.1 L252.0,268.3 L256.1,268.5 L260.1,267.5 L264.2,269.5 L268.2,271.5 L272.2,273.5 L277.9,273.5 M264.2,177.0 L261.1,180.5 L266.2,185.1 L269.6,186.5 L269.6,227.5 L270.2,233.5 L271.6,239.6 L271.6,272.3 M269.6,227.5 L290.0,227.5 M277.9,273.5 L278.3,282.4 L278.3,298.1 L281.3,301.2 L283.3,306.2 L285.4,312.3 L284.8,318.3 L283.3,324.4 L282.3,330.0 M278.3,282.4 L290.0,282.4 M81.5,299.8 L84.5,303.2 L87.5,306.2 L90.6,308.2 L94.6,312.3 L99.6,315.9 L105.7,318.7 L108.7,322.4 L111.4,326.8 L111.4,330.0 M320.4,176.6 L325.4,181.1 L330.5,186.1 L331.5,189.5 L337.5,190.1 L339.1,193.2 L335.5,199.2 L337.5,202.3 L344.6,206.3 L348.6,209.3 L350.7,214.4 L351.7,218.4 L354.7,220.4 L355.1,224.5 L349.6,227.1 M355.1,218.4 L357.7,217.0 L362.8,218.4 L365.8,216.4 L366.8,213.4 L370.8,209.3 L372.9,206.3 L378.9,206.3 L383.0,206.9 L388.0,205.3 L393.0,204.9 L397.1,202.3 L401.1,203.3 L406.2,200.2 L411.2,196.2 L417.3,193.2 L421.3,192.2 L423.3,187.1 M380.3,176.6 L380.3,183.1 L378.9,187.1 L380.3,193.2 L376.9,197.2 L373.9,201.2 L371.8,206.3 M422.7,176.6 L422.7,187.1 M423.3,187.1 L429.4,188.1 L432.4,192.2 L439.5,193.6 L445.5,194.2 L452.6,193.2 L457.6,197.2 M457.6,197.2 L462.7,195.2 L464.7,190.1 L469.8,187.1 L473.8,183.1 L479.8,181.1 L484.9,177.4 M457.6,197.2 L457.2,202.3 L460.7,207.3 L465.7,212.3 M465.7,212.3 L459.7,215.4 L453.6,220.4 L447.5,224.1 L441.5,225.9 M465.7,212.3 L469.8,215.4 L475.8,216.0 L481.9,215.4 L487.9,213.8 L493.0,212.3 L495.0,208.3 L500.0,203.3 L504.1,195.2 L509.1,197.2 L514.2,192.2 L518.2,190.1 L522.2,185.1 L525.3,182.1 L530.3,183.1 L533.3,186.1 L534.8,183.1 L532.3,179.0 L526.3,178.0 L518.2,180.0 L512.1,182.1 L507.1,185.1 L506.1,179.0 M489.9,177.4 L534.8,177.4 M349.6,227.1 L371.8,227.1 L372.9,225.5 L409.2,225.5 L410.2,226.5 L481.9,226.5 L482.9,227.5 L534.8,227.5 M280.0,227.5 L338.5,227.5 L340.6,230.5 L336.5,235.2 L345.6,235.2 M349.6,227.1 L347.6,233.5 L344.6,239.6 L340.6,244.6 L338.5,250.1 L333.5,254.7 L331.5,259.8 L327.4,263.8 L324.0,267.9 L322.4,272.9 L323.4,278.0 L323.4,282.0 L324.4,290.1 L326.8,294.1 L323.4,298.1 L320.4,303.2 L317.3,308.2 L316.3,313.3 L332.5,314.3 L345.6,314.7 L346.2,319.3 L347.6,324.4 M338.5,251.3 L449.6,251.3 M471.8,227.1 L469.8,229.9 L462.7,233.5 L457.6,234.5 L451.6,238.0 L445.5,240.6 L439.5,243.2 L433.4,245.7 L430.4,248.7 L430.4,251.3 M449.6,251.3 L459.7,248.7 L471.8,248.1 L481.9,248.7 L484.9,250.7 L485.5,254.1 L503.1,254.3 L520.2,268.9 M449.6,251.3 L445.5,255.7 L451.6,258.8 L454.6,263.8 L458.6,267.9 L462.7,271.9 L465.7,275.9 L469.8,280.0 L474.8,284.0 L476.8,290.1 L479.8,294.1 L481.9,297.7 M370.8,251.3 L369.8,259.8 L368.4,271.9 L366.8,284.0 L365.8,296.1 L365.8,308.2 L366.8,322.4 M410.8,251.3 L412.2,259.8 L414.2,271.9 L416.3,282.0 L418.3,290.1 L420.7,294.1 L418.3,297.1 L417.3,302.2 L419.3,308.2 L419.3,314.3 M378.9,314.3 L419.3,314.3 M378.9,314.3 L381.9,318.3 L380.9,323.4 M419.3,314.3 L420.3,318.3 L429.4,318.7 L462.7,320.3 L464.7,324.0 L466.7,320.3 L467.7,317.3 L474.8,318.3 M280.0,282.4 L323.4,282.4 M280.0,300.2 L283.0,304.2 L285.0,310.2 L286.1,316.3 L284.0,324.4 L283.0,330.0 M107.3,320.0 L109.7,324.0 L111.8,330.1 L114.8,334.1 L119.8,338.2 L124.9,341.2 L130.9,344.2 L135.0,345.2 L139.0,342.2 L141.0,337.2 L144.1,334.1 L149.1,331.7 L155.2,333.1 L162.2,333.1 L167.3,337.2 L171.3,340.2 L175.3,346.2 L179.4,352.3 L183.4,358.4 L187.5,363.4 L191.5,367.4 L193.5,373.5 L196.5,378.5 L199.6,383.6 L203.6,386.6 L208.6,388.6 L213.7,390.7 L219.8,391.7 L225.8,393.1 L228.8,394.7 M283.3,320.0 L283.9,325.0 L282.3,330.1 M481.9,375.5 L484.9,373.5 L487.9,375.5 L488.3,379.5 L485.9,381.6 L482.9,380.2 L481.9,375.5 M448.6,320.0 L462.7,320.0 L463.7,323.6 L465.7,324.0 L466.7,320.0 M366.8,509.8 L359.7,519.1 L355.1,517.9 L353.7,519.9 L326.4,519.9 L326.0,529.2 L319.4,529.6 L323.4,533.6 L329.5,536.7 L333.5,541.3 L335.5,542.7 L334.5,547.4 L314.7,547.4 L310.3,553.8 L306.2,560.9 L309.3,563.9 L307.3,568.0 M353.7,519.9 L354.3,533.6 L353.9,545.7 L353.1,549.8 L357.7,550.8 L362.8,552.8 M362.8,552.8 L359.7,555.8 L355.7,559.9 L353.7,563.9 L354.7,569.0 L351.7,573.0 L348.6,575.6 L344.6,579.1 L340.6,581.7 M348.6,575.6 L352.7,574.0 L356.7,575.6 L360.7,578.0 L366.8,582.1 L372.9,582.5 L376.9,584.1 L376.5,589.1 M376.5,589.1 L380.9,594.2 L385.0,596.2 L389.0,591.2 L392.0,586.1 L395.1,583.1 L401.1,582.1 L407.2,581.1 L411.2,579.1 L415.2,577.0 L418.3,572.0 L421.3,568.0 L425.3,569.0 L429.4,570.0 L435.4,568.0 L441.5,565.9 L447.5,564.9 M395.1,605.3 L399.1,603.3 L402.1,606.3 L401.1,609.3 L397.1,607.9 L395.1,605.3 M405.2,610.3 L409.2,609.3 L413.2,612.4 L417.3,616.4 L420.3,620.0 M405.2,610.3 L406.2,614.4 L409.2,618.4 L411.2,620.0 M404.7,612.4 L407.5,609.9 L411.3,610.5 L415.1,613.3 L418.9,617.1 L421.8,620.9 L423.7,624.7 L420.8,627.0 L416.1,625.7 L411.3,623.8 L407.9,620.9 L405.6,617.1 L404.7,612.4 M394.2,605.7 L398.0,603.8 L401.8,605.7 L402.8,608.6 L399.0,609.5 L395.2,608.0 L394.2,605.7 M407.5,619.0 L411.3,618.7 L412.3,620.6 M409.4,624.7 L417.0,626.6 L424.7,626.3 L430.4,628.6 L435.1,630.8 L438.9,630.5 M455.1,648.5 L452.3,652.3 L453.2,657.1 L452.3,661.9 L454.2,665.7 L452.3,669.5 L452.8,673.3 M514.1,667.6 L516.0,667.0 L516.4,668.9 L514.5,669.5 L514.1,667.6 M468.4,680.9 L471.3,679.9 L472.6,682.8 L470.3,684.1 L468.4,680.9 M535.1,679.9 L532.2,683.7 L533.1,687.6 M332.3,325.6 L334.8,324.1 L338.9,323.0 L343.0,324.6 L346.0,326.1 L345.0,328.1 L340.9,329.1 L336.9,328.6 L333.8,327.6 L332.3,325.6 M345.0,320.0 L347.0,323.0 L348.0,326.1 L346.0,328.1" fill="none" stroke="#0099cc" stroke-width="1" shape-rendering="crispEdges"/>
<path d="M534.8,261.4 L532.3,264.8 L530.3,268.9 L520.2,268.9 L515.2,272.9 L510.1,278.0 L509.1,281.0 L504.1,285.0 L499.0,287.0 L494.0,290.1 L489.9,292.1 L485.9,294.1 L481.9,298.1 L478.8,303.2 L476.8,308.2 L475.4,314.3 L475.8,320.3 L476.8,330.0 M332.5,325.4 L338.5,323.4 L342.6,326.4 L347.6,328.4 L348.6,325.4 L352.7,324.4 L360.7,324.0 L366.8,324.8 L372.9,323.4 L380.9,322.4 L389.0,323.4 L397.1,322.4 L403.1,324.0 L409.2,326.4 L413.2,330.0 M290.0,331.1 L282.3,333.1 L275.3,335.7 L269.2,338.2 L267.2,335.1 L265.2,337.2 L264.2,340.2 L260.1,344.2 L255.1,347.3 L250.0,350.3 L244.0,352.3 L239.9,350.3 L237.9,355.3 L233.9,358.4 L229.8,361.4 L226.8,365.4 L223.8,369.5 L221.4,372.5 L224.8,378.5 L226.8,384.6 L228.8,390.7 L229.4,396.7 L226.8,402.8 L222.8,410.8 L220.8,420.9 L219.3,431.0 L219.8,441.1 L220.8,451.2 L223.8,459.3 L226.8,463.3 L224.8,469.4 L228.8,475.0 M262.1,334.1 L265.2,332.1 L268.2,333.1 L266.2,336.1 M33.0,380.6 L37.1,380.6 L40.1,384.6 L42.1,387.6 L38.5,389.6 L37.7,395.7 L42.1,398.7 L46.1,395.9 L44.5,399.7 L50.2,402.4 L55.2,404.8 L59.3,407.2 L60.3,411.8 L66.3,416.5 L69.4,419.9 L74.4,424.0 L79.5,429.0 L83.5,433.0 L88.5,438.1 L92.6,442.1 L95.6,446.2 L96.6,453.2 L99.6,458.3 L102.7,462.3 L103.7,467.4 L100.7,472.4 L98.6,475.0 M33.0,427.0 L36.1,429.0 L38.1,433.0 L36.1,437.1 L33.0,439.5 M80.1,457.3 L80.9,461.3 L84.1,463.7 L87.5,466.4 M409.2,326.1 L413.2,330.1 L415.2,333.1 L419.3,335.7 L421.3,334.1 L425.3,331.7 L429.4,329.1 L433.4,328.1 L437.5,329.1 L441.5,331.1 L444.5,334.1 L447.5,337.2 L450.6,340.2 L453.6,342.6 L455.6,345.2 L456.6,349.3 L455.6,353.3 L454.6,357.3 L453.6,361.4 L456.6,365.4 L458.6,370.5 L460.7,374.5 L462.7,379.5 L464.7,383.6 L468.7,387.6 L470.8,391.7 L474.8,394.7 L476.8,397.7 L478.8,400.7 L480.9,403.8 L483.9,405.8 L487.9,404.8 L490.9,402.8 L494.0,399.7 L495.6,394.7 L497.0,388.6 L497.6,382.6 L497.0,376.5 L495.0,370.5 L493.0,365.4 L490.9,360.4 L488.9,355.3 L486.9,350.3 L484.9,344.2 L481.9,338.2 L479.8,332.1 L477.8,326.1 L475.8,320.0 M454.0,361.4 L457.6,363.4 L460.1,362.4 L458.6,365.4 L455.6,367.4 M462.7,378.5 L465.7,377.5 L466.7,380.6 L464.7,384.2 M478.8,401.8 L481.9,402.8 L483.9,405.8 M485.9,350.3 L488.9,352.3 L487.9,355.3 M464.1,414.5 L469.8,413.3 L475.8,411.8 L481.9,410.4 L487.9,408.4 L490.9,405.8 M513.2,381.6 L518.2,380.6 L522.2,379.5 L528.3,380.2 L534.3,378.5 M518.2,380.6 L520.2,383.6 L526.3,382.6 L532.3,383.0 M521.2,413.3 L525.3,409.8 L527.3,404.8 L529.3,408.8 L532.3,414.9 L534.8,420.9 L533.3,427.0 L530.3,420.9 L526.3,416.9 L521.2,413.3 M531.3,395.7 L533.9,397.7 L532.3,400.7 M509.1,396.3 L509.5,397.7 M420.3,457.3 L425.3,455.2 L428.4,450.2 L431.4,446.2 L437.5,442.1 L445.5,439.5 L455.6,437.5 L465.7,436.7 L475.8,436.1 L483.9,436.1 L492.0,437.5 L498.0,439.5 L504.1,442.1 L510.1,444.8 L516.2,446.2 L522.2,448.2 L528.3,450.8 L534.8,453.2 M425.3,455.2 L429.4,458.3 L433.4,454.2 L439.5,452.2 L445.5,450.2 L451.6,447.2 L455.6,444.1 L461.7,444.8 L469.8,445.2 L472.8,447.6 L465.7,449.2 L468.7,452.2 L473.8,451.2 L479.8,453.2 L485.9,454.2 L489.9,453.2 L496.0,455.2 L502.0,458.3 L508.1,459.3 L514.2,459.7 L519.2,461.3 L522.2,465.3 L524.3,470.4 L527.3,475.0 M502.0,441.1 L508.1,446.2 L514.2,449.2 L522.2,452.2 L530.3,455.7 L534.8,458.3 M506.1,468.4 L512.1,470.4 L518.2,473.4 L522.2,475.0 M448.6,459.3 L451.6,456.3 L456.6,457.3 L458.6,460.3 L454.6,463.3 L450.6,462.3 L448.6,459.3 M464.7,460.3 L468.7,458.9 M472.8,460.9 L476.8,459.3 M441.5,455.7 L443.9,455.2 M333.5,475.0 L335.5,471.4 L338.5,468.4 L344.6,466.4 L352.7,464.3 L360.7,462.3 L366.8,461.3 L374.9,461.7 L380.9,462.3 L386.0,461.3 L390.0,462.3 L392.0,467.4 L390.0,472.4 L389.0,475.0 M86.5,465.0 L87.5,466.6 M103.7,465.0 L103.1,469.0 L99.6,473.1 L102.3,476.1 L98.6,478.7 L95.6,480.1 L96.6,485.2 L99.6,489.2 L103.7,493.3 L106.7,496.9 L112.8,499.3 L118.8,501.7 L123.9,504.4 L126.9,507.4 L130.9,512.4 L137.0,514.5 L143.0,516.5 L149.1,517.9 L154.1,517.1 L158.2,520.5 L162.2,523.9 L167.3,527.6 L171.3,530.0 L179.4,532.6 L186.4,534.6 L191.5,537.7 L197.5,539.3 L203.6,540.7 L209.7,543.7 L215.7,546.8 L221.8,548.8 L228.8,550.8 L233.9,552.8 L239.9,554.2 L246.0,552.2 L252.0,549.8 L258.1,547.4 L262.1,544.7 L265.2,542.7 L270.2,543.7 L275.3,545.7 L280.3,548.8 L285.4,551.8 L290.0,554.8 M261.1,545.3 L265.2,541.3 L269.2,544.1 L274.3,546.8 L278.3,548.2 M224.8,465.0 L226.8,469.0 L229.8,473.1 L233.9,478.1 L237.9,483.2 L240.9,488.2 L242.0,493.3 L245.0,498.3 L248.0,502.3 L251.0,505.4 L256.1,506.4 L262.1,507.4 L266.2,510.4 L270.2,514.5 L275.3,513.4 L281.3,511.8 L286.4,510.4 L290.0,509.8 M249.0,504.4 L252.0,506.4 L256.1,505.4 M280.0,513.4 L286.1,511.0 L292.1,510.4 L293.1,511.8 L295.1,509.8 L300.2,507.8 L306.2,507.0 L310.3,508.4 L313.3,505.4 L319.4,505.0 L322.0,507.4 L318.4,510.4 L313.3,511.0 L310.3,508.4 M321.4,504.4 L325.4,501.3 L329.5,497.3 L331.5,492.3 L332.9,486.2 L334.1,480.1 L335.5,474.1 L338.5,470.0 L342.6,467.4 L348.6,466.0 L355.7,465.0 M389.0,465.0 L393.0,467.0 L390.6,471.1 L388.0,475.1 L385.0,479.1 L383.0,483.2 L380.9,487.2 L379.9,491.2 L376.9,492.3 L377.9,495.3 L379.9,499.3 L378.9,503.4 L376.9,507.4 L374.9,512.4 L373.9,517.5 L371.8,520.5 L369.8,523.5 L368.8,527.6 L368.4,532.6 L366.8,537.7 L364.8,541.7 L361.8,545.7 L358.7,548.8 L360.7,551.8 L363.8,553.4 M388.6,479.1 L392.0,477.1 L391.0,481.1 L389.0,482.8 L388.6,479.1 M377.9,495.3 L380.5,496.3 L379.3,498.9 L377.5,497.7 L377.9,495.3 M381.9,506.4 L384.0,505.4 L384.6,508.4 L382.5,511.0 L381.9,506.4 M363.8,510.4 L366.8,509.4 L369.8,505.4 L372.5,504.4 L371.8,508.4 L372.9,512.4 L370.8,516.5 L368.8,513.4 L366.8,511.4 L366.8,509.4 M368.8,522.5 L371.8,521.5 L372.5,524.5 L369.8,525.6 L368.8,522.5 M373.3,525.6 L374.9,524.5 L375.3,528.6 L373.9,529.6 L373.3,525.6 M378.9,529.2 L379.3,530.6 M363.8,553.4 L368.8,552.8 L374.9,551.4 L380.9,550.8 L387.0,551.8 L393.0,551.4 L401.1,550.8 L406.2,548.8 L413.2,549.4 L421.3,550.2 L427.4,551.8 L432.4,552.2 L435.4,554.8 L439.5,557.9 L443.5,559.9 L446.5,563.9 L448.6,565.9 L447.5,572.0 L448.0,577.0 L445.5,582.1 L443.5,588.1 L442.5,594.2 L441.5,600.2 L440.5,606.3 L441.5,610.3 L439.5,615.4 L438.5,620.0 M432.4,554.8 L435.4,558.3 L440.5,559.5 L444.5,561.5 L447.1,564.3 M389.0,547.4 L390.6,547.4 M394.7,543.7 L399.1,542.7 L406.2,541.7 M436.4,526.0 L436.8,526.6 M476.8,495.3 L479.8,496.3 L478.8,497.3 L476.8,496.9 M497.0,490.8 L501.0,490.2 M506.1,468.0 L512.1,471.1 L518.2,474.7 L523.2,477.1 L521.2,474.1 M520.2,465.0 L522.2,470.0 L527.3,474.1 L534.8,475.1 M534.8,509.4 L528.3,510.4 L523.2,513.0 L525.3,515.1 L530.3,516.5 L534.8,519.5 M533.3,486.2 L534.8,488.2 L533.9,490.2 M454.6,571.0 L456.6,575.0 M476.2,590.2 L476.6,591.2 M471.4,602.3 L471.8,604.3 M450.6,606.3 L451.6,609.3 M280.0,547.8 L286.1,551.8 L292.1,556.8 L298.2,561.9 L304.2,566.9 L308.3,571.0 L313.3,575.6 L318.4,579.1 L322.4,581.1 L328.4,581.7 L334.5,582.5 L340.6,585.1 L346.6,587.7 L352.7,589.8 L358.7,591.2 L364.8,593.2 L370.8,592.6 L374.9,591.8 L376.9,589.1 L379.9,590.2 L383.0,591.2 L380.9,594.2 L377.9,596.2 L380.9,599.2 L385.0,602.3 L390.0,606.3 L394.1,610.3 L398.1,614.4 L401.1,617.4 L403.1,620.0 M376.9,595.2 L379.9,597.2 L384.0,596.2 L385.0,594.2 M441.5,602.3 L443.1,604.3 L441.5,606.3 L440.1,604.3 L441.5,602.3 M39.9,638.3 L42.0,638.3 M380.9,600.0 L386.6,604.8 L392.3,609.5 L397.1,614.3 L401.8,619.0 L406.6,623.8 L409.4,625.7 L406.6,628.6 L405.6,630.5 L409.0,630.1 L409.8,632.4 L407.1,635.2 L405.6,639.0 L407.1,642.8 L409.4,644.7 L413.2,643.4 L416.1,645.3 L418.0,648.5 L419.9,646.6 L420.8,642.8 L417.0,640.9 L415.1,639.0 L418.9,640.0 L423.7,642.8 L425.6,647.6 L428.5,649.9 L434.2,651.4 L438.0,654.2 L441.8,657.1 L443.7,660.9 L440.8,664.7 L443.7,666.6 L447.5,667.6 L450.4,665.7 L447.5,663.8 L443.7,662.8 L445.6,661.9 L450.4,664.7 L452.3,668.5 L452.8,673.3 L454.2,670.4 L458.9,669.5 L463.7,670.0 L468.4,670.8 L471.3,673.3 L474.1,676.1 L476.0,679.0 L478.9,679.9 L479.9,676.1 L481.4,679.9 L482.7,683.7 L484.6,686.0 L489.4,686.6 L495.1,684.7 L498.9,682.2 L497.0,679.0 L494.1,676.1 L491.3,673.3 L490.3,670.4 L493.2,668.5 L497.0,667.0 L500.8,663.8 L503.6,660.5 L507.5,658.6 L512.2,658.1 L516.0,660.9 L519.8,663.8 L523.6,666.6 L527.4,669.5 L531.2,671.4 L535.1,673.3 M441.8,600.0 L442.7,603.8 L440.8,608.6 L439.9,613.3 L438.9,618.1 L437.6,622.8 L438.9,626.6 L441.8,630.5 L443.7,635.2 L446.5,639.0 L449.4,642.8 L453.2,646.6 L457.0,649.5 L460.8,651.4 L464.6,654.2 L468.4,657.1 L472.2,660.5 L476.0,661.9 L480.8,661.9 L485.6,660.0 L489.4,658.1 L494.1,656.1 L498.9,653.3 L502.7,650.4 L505.5,649.1 L510.3,649.9 L516.0,651.0 L521.7,651.8 L527.4,653.3 L531.2,656.1 L535.1,660.0 M459.9,652.3 L462.7,655.2 L467.5,656.1 L470.3,659.0 M441.8,600.0 L443.3,602.9 L441.8,605.3 L440.3,603.4 L441.8,600.0 M513.2,656.7 L515.1,659.0 M521.7,672.3 L524.6,675.2 L527.4,679.9 L531.2,684.7 L535.1,689.5 M521.7,672.3 L525.5,670.4 L529.3,671.4 M523.6,666.6 L526.5,665.7 L529.3,667.6 L533.1,669.5 M450.4,606.7 L451.3,609.5 M471.3,602.3 L471.5,603.4 M280.0,333.2 L286.1,332.7 L290.2,333.2 L294.2,333.7 L298.3,335.2 L302.3,336.2 L305.4,337.3 L307.4,335.2 L310.5,333.2 L314.5,333.7 L317.6,335.2 L320.6,337.3 L322.7,339.8 L325.7,341.3 L328.8,342.9 L327.7,344.4 L330.8,343.9 L332.8,341.8 L335.4,340.3 L337.9,341.8 L339.9,340.8 L340.9,338.8 L344.0,337.8 L347.0,339.8 L350.1,341.3 L353.1,343.4 L351.6,345.4 L355.2,344.4 L356.7,341.8 L354.6,340.8 L351.1,339.8 L349.1,337.8 L347.0,335.2 L349.1,333.2 L352.1,331.2 L355.2,328.6 L353.1,327.1 L351.1,325.6 L354.1,324.6 L358.2,324.1 L361.2,324.6 L364.3,325.6 L368.4,325.1 L372.4,325.6 L376.5,324.6 L380.5,324.6 L383.6,323.0 L386.6,321.5 L389.7,322.5 L393.8,323.0 L397.8,322.5 L401.9,323.6 L405.9,325.6 L410.0,326.6 M280.5,332.2 L284.1,332.0 L288.1,331.4 L289.6,329.1 L290.2,332.7 M306.4,334.2 L310.5,332.7 L313.5,334.2 L310.5,335.7 L306.4,334.2 M320.6,336.2 L323.7,339.3 L326.7,340.8 L329.8,343.4 M339.9,339.8 L343.0,338.3 L346.0,338.8 L348.0,340.3 M346.5,334.7 L350.1,332.7 L353.1,330.7 L355.7,329.1 L354.1,327.6 M347.5,335.7 L351.1,333.7 L354.1,331.4 M351.1,325.1 L355.2,324.1 L359.2,323.6 L363.3,325.1 L367.3,324.6 L371.4,325.1 L375.5,324.1 L379.5,324.1 M381.6,322.0 L385.6,320.5 L389.2,321.8 L392.7,322.5 L396.8,322.0 L401.4,323.0 M382.6,323.6 L386.6,322.2 L390.7,323.2 L394.8,323.6 M358.7,330.2 L360.2,332.2 L358.2,334.2 L355.7,337.3 M366.3,320.0 L367.3,322.0 L369.4,323.6 M381.6,320.0 L381.6,322.5 M262.1,333.6 L265.2,332.6 L268.2,332.1 L268.7,334.6 L266.2,336.2 L265.2,338.7 L263.6,341.2 L261.1,343.3 L256.0,346.8 L249.9,349.4 L243.8,350.9 L238.8,349.4 L237.7,351.6 L239.8,352.9 L235.7,355.0 L232.7,355.5 L233.7,357.3 L230.1,359.0 L228.6,361.1 L225.5,362.6 L224.0,364.1 L226.6,364.8 L227.8,366.1 L225.0,367.7 L224.5,370.2 L221.0,371.7 L223.0,373.2 L222.5,375.8 L224.0,377.8 L223.7,381.9 L225.0,385.9 L225.5,390.0 L227.1,392.0 M264.6,335.2 L267.2,337.2 L269.2,336.7 M236.2,355.5 L237.7,353.9 L240.8,352.4 L243.8,352.2 M229.1,361.6 L231.6,359.5 L234.7,357.5" fill="none" stroke="#00ffff" stroke-width="1" shape-rendering="crispEdges"/>
<rect x="162.5" y="330.5" width="243" height="250" fill="none" stroke="#ffffff" stroke-width="1" shape-rendering="crispEdges"/>
</svg>
<!-- icons overlay -->
<svg class="a" style="left:0;top:0;" width="1366" height="768" viewBox="0 0 1366 768">
<defs>
<radialGradient id="gGlobe" cx="0.4" cy="0.35" r="0.7"><stop offset="0" stop-color="#6fd0ff"/><stop offset="0.6" stop-color="#1a80d8"/><stop offset="1" stop-color="#0a3c90"/></radialGradient>
<radialGradient id="gBall" cx="0.4" cy="0.3" r="0.8"><stop offset="0" stop-color="#d6e6fa"/><stop offset="0.55" stop-color="#7aa6de"/><stop offset="1" stop-color="#2a5aa8"/></radialGradient>
<radialGradient id="gBall2" cx="0.42" cy="0.4" r="0.65"><stop offset="0" stop-color="#ffffff"/><stop offset="0.6" stop-color="#dce8f8"/><stop offset="1" stop-color="#a8c4ec"/></radialGradient>
<radialGradient id="gHelp" cx="0.45" cy="0.75" r="0.8"><stop offset="0" stop-color="#8ab4e8"/><stop offset="0.6" stop-color="#3465a8"/><stop offset="1" stop-color="#204a87"/></radialGradient>
<linearGradient id="gHeart" x1="0" y1="0" x2="1" y2="1"><stop offset="0" stop-color="#e85a38"/><stop offset="0.5" stop-color="#d82010"/><stop offset="1" stop-color="#c41008"/></linearGradient>
<linearGradient id="gFolder" x1="0" y1="0" x2="0" y2="1"><stop offset="0" stop-color="#95b6e3"/><stop offset="1" stop-color="#6b96d0"/></linearGradient>
<linearGradient id="gTabI" x1="0" y1="0" x2="0" y2="1"><stop offset="0" stop-color="#c8c8c8"/><stop offset="1" stop-color="#f2f2f2"/></linearGradient>
<radialGradient id="gYel"><stop offset="0" stop-color="#ffffe0"/><stop offset="0.45" stop-color="#f4ec30"/><stop offset="1" stop-color="#e8dc20" stop-opacity="0.7"/></radialGradient>
<linearGradient id="gOct" x1="0" y1="0" x2="0" y2="1"><stop offset="0" stop-color="#e05050"/><stop offset="1" stop-color="#d03838"/></linearGradient>
<filter id="ib1" x="-50%" y="-50%" width="200%" height="200%"><feGaussianBlur stdDeviation="1"/></filter>
</defs>
<!-- 1: McV globe -->
<g>
<clipPath id="gclip"><rect x="20" y="87.200" width="32" height="24"/></clipPath><circle cx="35.900" cy="96.900" r="10.600" fill="url(#gGlobe)" clip-path="url(#gclip)"/>
<path d="M33.500,87 L38,86.700 L37,90 L39.500,92 L37.500,96 L36,99 L35,95 L33,92 Z" fill="#061024" opacity="0.95"/>
<path d="M35,90.500 L38.500,90 L39,93.500 L37,96.500 L35.500,94 Z" fill="#b4ecff" opacity="0.95"/>
<path d="M40.500,103 L43,97 L45.500,98 L43.500,102.500 L41.500,105 Z" fill="#030a18"/>
<path d="M44.500,92 Q46.800,96 45.500,101 L43.800,98 Z" fill="#1060c0" opacity="0.6"/>
<path d="M25.700,86.900 L45.900,86.900 L45.900,89.300 L44.200,89.300 L39.400,106.800 L32.700,106.800 L27.500,89.300 L25.700,89.300 Z M32.400,89.300 L36.100,100.500 L39.600,89.300 Z" fill="#6aaad8" fill-rule="evenodd"/>
</g>
<!-- 2: new tab -->
<g>
<ellipse cx="70" cy="104" rx="9" ry="1.2" fill="#000" opacity="0.25" filter="url(#ib1)"/>
<path d="M59.5,103.5 L59.5,99.5 L61.5,99.5 L61.5,93 Q61.5,90.5 64,90.5 L76,90.5 Q78.5,90.5 78.5,93 L78.5,99.5 L80.5,99.5 L80.5,103.5 Z" fill="url(#gTabI)" stroke="#8c8c8c" stroke-width="1"/>
<circle cx="76.5" cy="92" r="3.6" fill="url(#gYel)"/>
</g>
<!-- 3: open folder -->
<g>
<ellipse cx="114" cy="105" rx="9" ry="1.3" fill="#000" opacity="0.3" filter="url(#ib1)"/>
<path d="M103.5,89 L109,88.5 L110,90 L118,90 L118,103 L106,104 Z" fill="#9a9a9a" stroke="#6a6a6a" stroke-width="0.8"/>
<path d="M108,88 L121,86 L122.5,92 L109,98 Z" fill="#f4f4f4" stroke="#9a9a9a" stroke-width="0.7"/>
<path d="M107,90 L120,88.5 L121.5,94 L108,99 Z" fill="#ffffff" stroke="#aaaaaa" stroke-width="0.6"/>
<path d="M108,94.5 L124.5,94.5 L122.5,104.5 L106,104.5 Z" fill="url(#gFolder)" stroke="#3b68ad" stroke-width="0.9"/>
</g>
<!-- 4: save/drive -->
<g>
<path d="M140,91.500 L156.700,91.500 L158.600,101.500 L158.600,106 Q158.600,107.300 157.300,107.300 L138.800,107.300 Q137.500,107.300 137.500,106 L137.500,101.500 Z" fill="#f2f2f2" stroke="#8a8a8a" stroke-width="1.100"/>
<path d="M138.200,101.500 L158,101.500 L158,106.700 L138.200,106.700 Z" fill="#e4e4e4"/>
<rect x="140" y="103" width="7" height="2.500" fill="#9c9c9c"/><path d="M148.500,103 V105.500 M150.500,103 V105.500 M152.500,103 V105.500 M154.500,103 V105.500" stroke="#b8b8b8" stroke-width="1"/>
<path d="M138.600,91 C138.200,87.500 141,86 145,86.200 C150.500,86.600 151.800,90.500 151.500,94.900 L154,94.900 L148.300,100.800 L142.900,94.900 L146.300,94.900 C146.500,91.500 145,89.800 142.500,89.600 C140.500,89.500 139.300,90.200 138.600,91 Z" fill="#4f8fca" stroke="#2e6ca8" stroke-width="0.600"/>
</g>
<!-- 5: heart + arrow -->
<g><ellipse cx="192.0" cy="105.300" rx="8.500" ry="1.700" fill="#000" opacity="0.32" filter="url(#ib1)"/><path d="M192.0,105.500 L183.5,97.500 Q181.2,94 182.5,91 Q184.5,87.800 188.0,88.200 Q190.5,88.600 192.0,91 Q193.5,88.600 196.0,88.200 Q199.5,87.800 201.5,91 Q202.8,94 200.5,97.500 Z" fill="url(#gHeart)" stroke="#a01414" stroke-width="1"/><path d="M184.500,94 C184.500,91.500 186.500,90.800 189,91 C192.500,91.500 193.800,94 194,97 L196.200,97 L191.800,101.800 L187.800,97 L190.300,97 C190,95 189,93.700 187.300,93.600 C186,93.500 185.200,93.700 184.500,94 Z" fill="#4f94d0" stroke="#2e6ca8" stroke-width="0.500"/></g>
<!-- 6: heart + tools -->
<g><ellipse cx="226.0" cy="105.300" rx="8.500" ry="1.700" fill="#000" opacity="0.32" filter="url(#ib1)"/><path d="M226.0,105.500 L217.5,97.500 Q215.2,94 216.5,91 Q218.5,87.800 222.0,88.200 Q224.5,88.600 226.0,91 Q227.5,88.600 230.0,88.200 Q233.5,87.800 235.5,91 Q236.8,94 234.5,97.500 Z" fill="url(#gHeart)" stroke="#a01414" stroke-width="1"/><path d="M223.300,91.800 L231.300,100.300" stroke="#c4c4c4" stroke-width="1.700" stroke-linecap="round"/><path d="M221.800,92.300 L223.300,93.300 L224.800,91" stroke="#d4d4d4" stroke-width="1.300" fill="none"/><path d="M231.500,91 L225,97" stroke="#d8d8d8" stroke-width="1.200" stroke-linecap="round"/><ellipse cx="223.400" cy="98.500" rx="2.500" ry="1.700" transform="rotate(-40 223.400 98.500)" fill="#3a78c8" stroke="#2a5aa0" stroke-width="0.400"/></g>
<!-- 7: help -->
<g>
<ellipse cx="270" cy="106.200" rx="8" ry="1.300" fill="#000" opacity="0.3" filter="url(#ib1)"/>
<circle cx="269.900" cy="96.700" r="9.700" fill="url(#gHelp)" stroke="#204a87" stroke-width="0.900"/>
<circle cx="269.900" cy="96.700" r="8.100" fill="none" stroke="#ffffff" stroke-width="0.900"/>
<path d="M266.200,94.300 Q266.100,90.900 270.100,90.900 Q274.100,90.900 274.100,94.100 Q274.100,96 272.200,97.100 Q271.400,97.600 271.400,99 L268.600,99 Q268.500,96.800 270,95.800 Q271.200,95 271.200,94.100 Q271.200,93.100 270.100,93.100 Q268.900,93.100 268.900,94.300 Z" fill="#ffffff"/>
<rect x="268.600" y="100.100" width="2.800" height="2.700" fill="#ffffff"/>
</g>
<!-- 8: envelope + arrow -->
<g>
<rect x="295.500" y="88.500" width="18" height="13" rx="1" fill="#f6f6f6" stroke="#7c7c78" stroke-width="1"/>
<path d="M296,89 L304.500,97 L313,89" fill="none" stroke="#c4c4c4" stroke-width="0.700"/>
<path d="M298.700,94.600 L302.300,94.600 L302.600,97.600 L305,97.600 L305,94.200 L311.800,101.300 L305.200,107.800 L305.200,104.500 L301,104.500 L300.500,98 L298.700,97.600 Z" fill="#f9a21a" stroke="#dc6e00" stroke-width="0.800" stroke-linejoin="round"/>
<path d="M301.500,99 L305.800,99 L305.800,96.500 L310.300,101.300 L306,105.600 L306,103.300 L302,103.300 Z" fill="#ffc040" opacity="0.7"/>
</g>
<!-- 9: scissors ball -->
<g>
<ellipse cx="347.500" cy="105.800" rx="7.500" ry="1.400" fill="#000" opacity="0.3" filter="url(#ib1)"/>
<circle cx="347.400" cy="96.400" r="9.200" fill="url(#gBall2)" stroke="#4a78c0" stroke-width="1"/>
<path d="M340,99 Q347.400,108 354.800,99 Q352,104.800 347.400,105 Q342.500,104.800 340,99 Z" fill="#4a84cc" opacity="0.85"/>
<path d="M343.500,89.800 L349.300,98.500" stroke="#b4b4b4" stroke-width="2"/>
<path d="M351.200,89.800 L345.800,98.500" stroke="#c8c8c8" stroke-width="2"/>
<path d="M344.300,90.300 L348.500,96.500 M350.500,90.300 L347,96" stroke="#e8e8e8" stroke-width="0.700"/>
<ellipse cx="344.400" cy="100.800" rx="2.700" ry="2.300" fill="#d41424" stroke="#b00c18" stroke-width="0.400"/>
<ellipse cx="350.600" cy="100.800" rx="2.700" ry="2.300" fill="#d41424" stroke="#b00c18" stroke-width="0.400"/>
<circle cx="344.200" cy="100.900" r="0.700" fill="#f0a0a8"/><circle cx="350.800" cy="100.900" r="0.700" fill="#9a70a0"/>
</g>
<!-- 10: doc ball -->
<g>
<ellipse cx="382.500" cy="105.800" rx="7.500" ry="1.400" fill="#000" opacity="0.3" filter="url(#ib1)"/>
<circle cx="382.500" cy="96.300" r="9.200" fill="url(#gBall2)" stroke="#4a78c0" stroke-width="1"/>
<rect x="377.500" y="91.500" width="9" height="10" fill="#fafafa" stroke="#707070" stroke-width="1"/>
<path d="M379,93.500 H385 M379,95.500 H385 M379,97.500 H383.500 M379,99.500 H383" stroke="#5a5a5a" stroke-width="0.800"/>
<path d="M384.300,96.300 L386.600,99.800 L389.800,95.300" stroke="#e8e8e8" stroke-width="2.200" fill="none"/>
<path d="M384.300,96.300 L386.600,99.800 L389.800,95.300" stroke="#4a4a4a" stroke-width="1.200" fill="none"/>
<path d="M384.500,102.800 L387.300,100 M387.800,102.800 L385.300,100" stroke="#c01020" stroke-width="1"/>
<ellipse cx="383.400" cy="104.200" rx="2.400" ry="1.900" fill="#d41424" stroke="#a00c18" stroke-width="0.400"/>
<ellipse cx="388.700" cy="104.200" rx="2.400" ry="1.900" fill="#d41424" stroke="#a00c18" stroke-width="0.400"/>
<circle cx="383.400" cy="104.300" r="0.600" fill="#704080"/><circle cx="388.700" cy="104.300" r="0.600" fill="#704080"/>
</g>
<!-- 11: stop -->
<g>
<ellipse cx="426" cy="106.500" rx="8" ry="1.300" fill="#000" opacity="0.35" filter="url(#ib1)"/>
<path d="M421.800,87.300 L430.200,87.300 L436,93 L436,101 L430.200,106.500 L421.800,106.500 L416,101 L416,93 Z" fill="url(#gOct)" stroke="#b01818" stroke-width="1"/>
</g>
</svg>
<!-- side icons -->
<svg class="a" style="left:0;top:0;" width="1366" height="768" viewBox="0 0 1366 768">
<defs><linearGradient id="gGrn" x1="0" y1="0" x2="0" y2="1"><stop offset="0" stop-color="#9ad29a"/><stop offset="1" stop-color="#3f9a3f"/></linearGradient><linearGradient id="gGrnH" x1="0" y1="0" x2="1" y2="0"><stop offset="0" stop-color="#9ad29a"/><stop offset="1" stop-color="#3f9a3f"/></linearGradient><radialGradient id="gLens" cx="0.35" cy="0.3" r="0.8"><stop offset="0" stop-color="#e8f2fc"/><stop offset="1" stop-color="#b8d2f0"/></radialGradient></defs>
<g transform="translate(10.2,144.0)"><path d="M0,5 H8.5 V13.5 H0 Z M5,0 H13.5 V8.5 H5 Z M0,5 L5,0 M8.5,5 L13.5,0 M8.5,13.5 L13.5,8.5 M0,13.5 L5,8.5" fill="none" stroke="#4a4a4a" stroke-width="1"/><polygon points="0.0,5.0 5.0,0.0 13.5,0.0 8.5,5.0" fill="#1090e0" stroke="#4a4a4a" stroke-width="1"/></g>
<g transform="translate(10.2,160.1)"><polygon points="0.0,13.5 5.0,8.5 13.5,8.5 8.5,13.5" fill="#1090e0"/><path d="M0,5 H8.5 V13.5 H0 Z M5,0 H13.5 V8.5 H5 Z M0,5 L5,0 M8.5,5 L13.5,0 M8.5,13.5 L13.5,8.5 M0,13.5 L5,8.5" fill="none" stroke="#4a4a4a" stroke-width="1"/></g>
<g transform="translate(10.2,176.2)"><polygon points="5.0,0.0 13.5,0.0 13.5,8.5 5.0,8.5" fill="#1090e0"/><path d="M0,5 H8.5 V13.5 H0 Z M5,0 H13.5 V8.5 H5 Z M0,5 L5,0 M8.5,5 L13.5,0 M8.5,13.5 L13.5,8.5 M0,13.5 L5,8.5" fill="none" stroke="#4a4a4a" stroke-width="1"/></g>
<g transform="translate(10.2,192.3)"><path d="M0,5 H8.5 V13.5 H0 Z M5,0 H13.5 V8.5 H5 Z M0,5 L5,0 M8.5,5 L13.5,0 M8.5,13.5 L13.5,8.5 M0,13.5 L5,8.5" fill="none" stroke="#4a4a4a" stroke-width="1"/><polygon points="8.5,5.0 13.5,0.0 13.5,8.5 8.5,13.5" fill="#1090e0" stroke="#4a4a4a" stroke-width="1"/></g>
<g transform="translate(10.2,208.4)"><path d="M0,5 H8.5 V13.5 H0 Z M5,0 H13.5 V8.5 H5 Z M0,5 L5,0 M8.5,5 L13.5,0 M8.5,13.5 L13.5,8.5 M0,13.5 L5,8.5" fill="none" stroke="#4a4a4a" stroke-width="1"/><polygon points="0.0,5.0 8.5,5.0 8.5,13.5 0.0,13.5" fill="#1090e0" stroke="#4a4a4a" stroke-width="1"/></g>
<g transform="translate(10.2,224.5)"><polygon points="0.0,5.0 5.0,0.0 5.0,8.5 0.0,13.5" fill="#1090e0"/><path d="M0,5 H8.5 V13.5 H0 Z M5,0 H13.5 V8.5 H5 Z M0,5 L5,0 M8.5,5 L13.5,0 M8.5,13.5 L13.5,8.5 M0,13.5 L5,8.5" fill="none" stroke="#4a4a4a" stroke-width="1"/></g>
<path d="M10.5,240.5 H23.5 V253.5 H10.5 Z M13.5,243.5 H20.5 V250.5 H13.5 Z M10.5,240.5 L13.5,243.5 M23.5,240.5 L20.5,243.5 M10.5,253.5 L13.5,250.5 M23.500,253.500 L20.500,250.500" fill="none" stroke="#4a4a4a" stroke-width="1"/>
<g transform="translate(10.2,261.5) scale(0.6)"><path d="M0,5 H8.5 V13.5 H0 Z M5,0 H13.5 V8.5 H5 Z M0,5 L5,0 M8.5,5 L13.5,0 M8.5,13.5 L13.5,8.5 M0,13.5 L5,8.5" fill="none" stroke="#4a4a4a" stroke-width="1.500"/></g>
<path d="M15,258.500 Q21.500,258 22.500,264" fill="none" stroke="#4a4a4a" stroke-width="1.100"/><path d="M14.500,258.500 L17,256.500 M14.500,258.500 L17,260.500 M22.500,265.500 L20.500,263 M22.500,265.500 L24.300,263" stroke="#4a4a4a" stroke-width="1.100" fill="none"/>
<path d="M15.500,273 V286 M15.500,273.500 H19 M15.500,277.500 H19 M15.500,281.500 H19 M15.500,285.500 H19" fill="none" stroke="#4a4a4a" stroke-width="1"/>
<path d="M12.500,293.500 A5,5 0 1 1 17.500,300.300" fill="none" stroke="#4aa84a" stroke-width="2.600"/><path d="M11,298 L16.500,296.500 L16,302.500 Z" fill="#4aa84a"/>
<path d="M18.300,347.300 L22,350.600" stroke="#d0a060" stroke-width="2.600" stroke-linecap="round"/><circle cx="14.800" cy="342.900" r="4.800" fill="url(#gLens)" stroke="#7aa0d8" stroke-width="1"/>
<path d="M19.500,340.500 V346.500 M16.500,343.500 H22.500" stroke="#2e7a2e" stroke-width="2.200"/><path d="M19.500,341.200 V345.800 M17.200,343.500 H21.800" stroke="#5ab05a" stroke-width="1"/>
<path d="M18.300,363.300 L22,366.600" stroke="#d0a060" stroke-width="2.600" stroke-linecap="round"/><circle cx="14.800" cy="358.900" r="4.800" fill="url(#gLens)" stroke="#7aa0d8" stroke-width="1"/>
<rect x="16.200" y="358" width="6.800" height="2.800" fill="#f04050" stroke="#c00010" stroke-width="0.800"/>
<rect x="12" y="376" width="10.500" height="7.500" fill="#f6f6f6" stroke="#9a9a9a" stroke-width="0.600"/><rect x="15.300" y="378" width="3.200" height="5.500" fill="#909090" stroke="#606060" stroke-width="0.500"/>
<path d="M9.500,378 L17.200,370.500 L25,378" fill="none" stroke="#c08a48" stroke-width="2.400" stroke-linejoin="miter"/>
<ellipse cx="11.500" cy="382.800" rx="2.600" ry="1.500" fill="#5ab45a"/><ellipse cx="22.500" cy="382.800" rx="2.600" ry="1.500" fill="#5ab45a"/>
<polygon points="9.9,392.9 14.4,388.9 14.4,391.2 23.7,391.2 23.7,394.6 14.4,394.6 14.4,396.9" fill="url(#gGrn)" stroke="#3a8a3a" stroke-width="0.700"/>
<polygon points="23.9,408.7 19.4,404.7 19.4,407.0 10.1,407.0 10.1,410.4 19.4,410.4 19.4,412.7" fill="url(#gGrn)" stroke="#3a8a3a" stroke-width="0.700"/>
<polygon points="17.0,417.6 13.0,422.1 15.3,422.1 15.3,431.4 18.7,431.4 18.7,422.1 21.0,422.1" fill="url(#gGrnH)" stroke="#3a8a3a" stroke-width="0.700"/>
<polygon points="17.0,448.2 13.0,443.7 15.3,443.7 15.3,434.4 18.7,434.4 18.7,443.7 21.0,443.7" fill="url(#gGrnH)" stroke="#3a8a3a" stroke-width="0.700"/>
<path d="M12,466.5 H18 Q22.500,466.5 22.500,470.5 Q22.500,474.5 18,474.5 H15" fill="none" stroke="#4aa84a" stroke-width="3"/><path d="M10,474.5 L15.500,470.0 L15.500,478.8 Z" fill="#4aa84a" stroke="#3a8a3a" stroke-width="0.400"/>
<path d="M19,485 H15 Q11.500,485 11.500,489 Q11.500,492.5 15,492.5 H23" fill="none" stroke="#c8c8c8" stroke-width="3"/><path d="M24,485 L18.500,480.5 L18.500,489.3 Z" fill="#c8c8c8" stroke="#b8b8b8" stroke-width="0.400"/>
</svg>
<!-- misc overlay -->
<svg class="a" style="left:0;top:0;" width="1366" height="768" viewBox="0 0 1366 768">
<defs>
<clipPath id="tbclip"><rect x="0" y="0" width="1366" height="25.5"/></clipPath>
<filter id="mb2" x="-50%" y="-50%" width="200%" height="200%"><feGaussianBlur stdDeviation="1.6"/></filter>
<radialGradient id="gApp" cx="0.35" cy="0.45" r="0.75"><stop offset="0" stop-color="#8ccaf4"/><stop offset="0.7" stop-color="#6cacdc"/><stop offset="1" stop-color="#3a9ae8"/></radialGradient>
<linearGradient id="gAnim" x1="0" y1="0" x2="1" y2="1"><stop offset="0" stop-color="#a8a8d8"/><stop offset="1" stop-color="#3c3c8c"/></linearGradient>
<radialGradient id="gInfo" cx="0.4" cy="0.3" r="0.8"><stop offset="0" stop-color="#a8c8f0"/><stop offset="0.6" stop-color="#5a8cd0"/><stop offset="1" stop-color="#3a68b0"/></radialGradient>
<linearGradient id="gLock" x1="0" y1="0" x2="0" y2="1"><stop offset="0" stop-color="#f6c048"/><stop offset="0.5" stop-color="#fde090"/><stop offset="1" stop-color="#eca828"/></linearGradient>
<linearGradient id="gTrash" x1="0" y1="0" x2="1" y2="0"><stop offset="0" stop-color="#c4c4c4"/><stop offset="0.4" stop-color="#f0f0f0"/><stop offset="1" stop-color="#bcbcbc"/></linearGradient>
<linearGradient id="gThumb" x1="0" y1="0" x2="0" y2="1"><stop offset="0" stop-color="#ffffff"/><stop offset="0.5" stop-color="#f0f5fb"/><stop offset="1" stop-color="#b8cfe5"/></linearGradient>
<linearGradient id="gWinI" x1="0" y1="0" x2="1" y2="1"><stop offset="0" stop-color="#c8daf0"/><stop offset="0.5" stop-color="#ffffff"/><stop offset="1" stop-color="#e8eef8"/></linearGradient>
</defs>
<g clip-path="url(#tbclip)"><g filter="url(#mb2)"><circle cx="127" cy="11" r="23" fill="url(#gApp)"/><path d="M120,-2 L132,0 L128,7 L122,6 Z" fill="#4a6a8a" opacity="0.7"/><path d="M118,3 L130,6 L126,12 Z" fill="#b8e4fc" opacity="0.8"/><path d="M136,19 Q142,18 143,26 L136,27 Z" fill="#051020"/></g></g>
<circle cx="1135.9" cy="12.7" r="8" fill="#e6e6e6"/><circle cx="1135.9" cy="8.3" r="1.6" fill="#000"/><path d="M1131,10.6 L1140.800,10.600 L1140.800,12.200 L1137.600,12.600 L1138.800,18.600 L1137.200,19 L1135.900,14.800 L1134.600,19 L1133,18.600 L1134.200,12.600 L1131,12.200 Z" fill="#000"/>
<path d="M1168,10.300 L1170.800,10.300 L1174.800,6.500 L1174.800,18.700 L1170.800,15 L1168,15 Z" fill="#e6e6e6"/><path d="M1176.500,9.700 Q1178.300,12.600 1176.500,15.500" fill="none" stroke="#e6e6e6" stroke-width="1.400"/><path d="M1178.500,7.600 Q1181.600,12.600 1178.500,17.600" fill="none" stroke="#b4b4b4" stroke-width="1.400"/><path d="M1180.600,5.800 Q1184.800,12.600 1180.600,19.400" fill="none" stroke="#7a7a7a" stroke-width="1.300"/>
<path d="M1211.500,5.600 H1221 V13.500 H1211.500 Z M1213.200,7.200 V11.800 H1219.300 V7.200 Z" fill="#e6e6e6" fill-rule="evenodd"/><rect x="1215.400" y="13.500" width="1.800" height="3.600" fill="#e6e6e6"/><rect x="1210" y="17" width="12.400" height="2.600" fill="#e6e6e6"/>
<path d="M1248,8 H1258.500 V13 H1256.800 V9.700 H1249.700 V18.800 H1254 V20.500 H1248 Z" fill="#e6e6e6"/><rect x="1250.800" y="5.800" width="5" height="2.400" fill="#e6e6e6"/><path d="M1251.300,11.500 H1255.500 M1251.300,14 H1255 M1251.300,16.500 H1254" stroke="#e6e6e6" stroke-width="1.300"/><path d="M1259.800,12.500 L1256,17 L1258.600,17 L1257,21 L1261.800,15.600 L1259.200,15.600 L1261,12.500 Z" fill="#8a8a8a"/>
<path d="M1290.500,5.500 H1301.500 Q1303,5.500 1303,7 V13.500 Q1303,15 1301.500,15 H1300.500 L1301.500,18.500 L1297,15 H1290.500 Q1289,15 1289,13.500 V7 Q1289,5.500 1290.500,5.500 Z" fill="#555555"/><path d="M1293.400,7.700 L1298.800,12.700 M1298.800,7.700 L1293.400,12.700" stroke="#0a0a0a" stroke-width="1.700"/>
<path d="M756.300,37 L764,44.700 M764,37 L756.300,44.700" stroke="#ffffff" stroke-width="2.300"/>
<path d="M1347.300,39.500 L1354.300,46.500 M1354.300,39.500 L1347.300,46.500" stroke="#d0d0d0" stroke-width="2.200"/>
<path d="M84.800,125.800 L90.300,131.300 M90.300,125.800 L84.800,131.300" stroke="#222" stroke-width="1.300"/>
<rect x="9" y="73.5" width="6.0" height="1" fill="#333"/>
<rect x="44" y="73.5" width="7.0" height="1" fill="#333"/>
<rect x="81" y="73.5" width="8.5" height="1" fill="#333"/>
<rect x="140" y="73.5" width="7.0" height="1" fill="#333"/>
<rect x="198.5" y="73.5" width="3.0" height="1" fill="#333"/>
<rect x="244" y="73.5" width="8.0" height="1" fill="#333"/>
<rect x="307" y="73.5" width="12.0" height="1" fill="#333"/>
<rect x="370" y="73.5" width="9.0" height="1" fill="#333"/>
<rect x="34.6" y="169.5" width="7.9" height="1" fill="#333"/>
<rect x="78.1" y="169.5" width="7.4" height="1" fill="#333"/>
<rect x="588" y="199.300" width="144" height="1" fill="#0055ff"/><rect x="588" y="283.300" width="144" height="1" fill="#0055ff"/>
<path d="M401.2,161.2 L411.2,161.2 L406.2,166.2 Z" fill="#222"/>
<path d="M1036.0,343.5 L1046.0,343.5 L1041.0,348.5 Z" fill="#222"/>
<path d="M980.0,373.5 L990.0,373.5 L985.0,378.5 Z" fill="#222"/>
<path d="M423.4,162.3 L428.7,156.5 L428.7,168.2 Z" fill="url(#gAnim)" stroke="#3c3c8c" stroke-width="0.500"/><path d="M428.9,162.3 L434.7,156.5 L434.7,168.2 Z" fill="url(#gAnim)" stroke="#3c3c8c" stroke-width="0.500"/>
<path d="M443.3,162.3 L450.0,156.5 L450.0,168.2 Z" fill="url(#gAnim)" stroke="#3c3c8c" stroke-width="0.500"/><rect x="451.100" y="157" width="2.700" height="11" fill="#8a8ac8" stroke="#3c3c8c" stroke-width="0.500"/>
<path d="M472.2,162.3 L464.8,156.5 L464.8,168.2 Z" fill="url(#gAnim)" stroke="#3c3c8c" stroke-width="0.500"/>
<rect x="481" y="157" width="2.700" height="11" fill="#8a8ac8" stroke="#3c3c8c" stroke-width="0.500"/><path d="M492.1,162.3 L485.7,156.5 L485.7,168.2 Z" fill="url(#gAnim)" stroke="#3c3c8c" stroke-width="0.500"/>
<path d="M506.2,162.3 L500.3,156.5 L500.3,168.2 Z" fill="url(#gAnim)" stroke="#3c3c8c" stroke-width="0.500"/><path d="M512.0,162.3 L506.4,156.5 L506.4,168.2 Z" fill="url(#gAnim)" stroke="#3c3c8c" stroke-width="0.500"/>
<circle cx="524.700" cy="162.700" r="6.700" fill="url(#gInfo)" stroke="#4a78c0" stroke-width="0.600"/><circle cx="524.700" cy="159.300" r="1.200" fill="#fff"/><path d="M523.300,161.300 H525.700 V166 H526.700 V167 H522.900 V166 H523.900 V162.300 H523.300 Z" fill="#fff"/>
<path d="M541.200,149.900 L545,146.200 L545,153.700 Z" fill="#5a7ac8"/><path d="M541,150 L544.800,146.200" stroke="#111" stroke-width="0.900"/><path d="M545,162 L541.500,158.200 L541.500,165.800 Z" fill="#5a7ac8"/><path d="M541.500,158 V166" stroke="#111" stroke-width="0.900"/>
<rect x="752.500" y="147.500" width="14" height="11" fill="url(#gWinI)" stroke="#5a82c8" stroke-width="1"/><rect x="753" y="147" width="13" height="2.500" fill="#6a92d8"/><path d="M762.500,153 L766.500,157 L764.300,157 L764.300,160 L760.700,160 L760.700,157 L758.500,157 Z" fill="#4aa84a" stroke="#2e8a2e" stroke-width="0.500"/>
<path d="M570.0,173.8 L572.3,176.7 L577.0,170.3" fill="none" stroke="#111" stroke-width="2.200"/>
<path d="M573.0,194.8 L575.3,197.7 L580.0,191.3" fill="none" stroke="#111" stroke-width="2.200"/>
<path d="M570.0,257.8 L572.3,260.7 L577.0,254.3" fill="none" stroke="#111" stroke-width="2.200"/>
<path d="M573.0,278.8 L575.3,281.7 L580.0,275.3" fill="none" stroke="#111" stroke-width="2.200"/>
<path d="M735.6,192.5 V190.0 A4.4,4.2 0 0 1 744.4,190.0 V192.5" fill="none" stroke="#a4a4a4" stroke-width="2"/><rect x="733.5" y="192.5" width="13.0" height="9.0" fill="url(#gLock)" stroke="#d88c18" stroke-width="1"/><rect x="739.0" y="195.0" width="2" height="4" fill="#a87818"/><path d="M735.5,195.5 H737.5 M735.5,198.5 H737.5 M742.5,195.5 H744.5 M742.5,198.5 H744.5" stroke="#e89c20" stroke-width="0.900"/>
<path d="M732.5,275.0 V273.0 A4.4,4.2 0 0 1 741.3,273.0 V276.5" fill="none" stroke="#a4a4a4" stroke-width="2"/><rect x="733.5" y="276.5" width="13.0" height="9.0" fill="url(#gLock)" stroke="#d88c18" stroke-width="1"/><rect x="739.0" y="279.0" width="2" height="4" fill="#a87818"/><path d="M735.5,279.5 H737.5 M735.5,282.5 H737.5 M742.5,279.5 H744.5 M742.5,282.5 H744.5" stroke="#e89c20" stroke-width="0.900"/>
<path d="M1045.6,429.5 V427.0 A4.4,4.2 0 0 1 1054.4,427.0 V429.5" fill="none" stroke="#a4a4a4" stroke-width="2"/><rect x="1043.5" y="429.5" width="13.0" height="9.0" fill="url(#gLock)" stroke="#d88c18" stroke-width="1"/><rect x="1049.0" y="432.0" width="2" height="4" fill="#a87818"/><path d="M1045.5,432.5 H1047.5 M1045.5,435.5 H1047.5 M1052.5,432.5 H1054.5 M1052.5,435.5 H1054.5" stroke="#e89c20" stroke-width="0.900"/>
<path d="M755.5,189.5 Q755.5,187.5 760,187.5 Q764.5,187.5 764.5,189.5 V199 Q764.5,201 760,201 Q755.5,201 755.5,199 Z" fill="url(#gTrash)" stroke="#a0a0a0" stroke-width="1"/><ellipse cx="760" cy="189.8" rx="4" ry="1.600" fill="#e8e8e8" stroke="#a8a8a8" stroke-width="0.700"/><rect x="758.6" y="188" width="2.800" height="1.600" fill="#f4f4f4" stroke="#a0a0a0" stroke-width="0.500"/><path d="M758.5,193 V199 M761.5,193 V199" stroke="#c0c0c0" stroke-width="0.800"/>
<path d="M755.5,273.5 Q755.5,271.5 760,271.5 Q764.5,271.5 764.5,273.5 V283 Q764.5,285 760,285 Q755.5,285 755.5,283 Z" fill="url(#gTrash)" stroke="#a0a0a0" stroke-width="1"/><ellipse cx="760" cy="273.8" rx="4" ry="1.600" fill="#e8e8e8" stroke="#a8a8a8" stroke-width="0.700"/><rect x="758.6" y="272" width="2.800" height="1.600" fill="#f4f4f4" stroke="#a0a0a0" stroke-width="0.500"/><path d="M758.5,277 V283 M761.5,277 V283" stroke="#c0c0c0" stroke-width="0.800"/>
<path d="M792.500,143 V266.500 M796,136.500 H801.500 M792.500,230.500 H801.500 M792.500,248.500 H801.500 M792.500,266.500 H801.500 M812.500,145 V208.500 M812.500,154.500 H821.500 M812.500,172.500 H821.500 M812.500,190.500 H821.500 M812.500,208.500 H820.500 M792.500,266.500 V276" fill="none" stroke="#9eb6d2" stroke-width="1" shape-rendering="crispEdges"/>
<circle cx="793" cy="135.500" r="2.300" fill="#fff" stroke="#3c63b5" stroke-width="1.400"/><path d="M793,137.800 V143" stroke="#3c63b5" stroke-width="1.600"/>
<circle cx="792.500" cy="226.500" r="2.300" fill="#fff" stroke="#3c63b5" stroke-width="1.400"/><path d="M794.800,226.500 H800" stroke="#3c63b5" stroke-width="1.600"/>
<clipPath id="treeclip"><rect x="785" y="127" width="555" height="150.600"/></clipPath>
<g clip-path="url(#treeclip)"><text x="805" y="284.800" font-family="Liberation Sans" font-size="12.2" fill="#333" textLength="128" lengthAdjust="spacingAndGlyphs">Data Probe/Time Series</text></g>
<path d="M1344.800,137 L1349,132.800 L1353.200,137 Z" fill="#222"/><path d="M1344.800,266.500 L1353.200,266.500 L1349,270.700 Z" fill="#222"/>
<path d="M1345,194.500 H1353 M1345,196.500 H1353 M1345,198.500 H1353" stroke="#6382bf" stroke-width="1" shape-rendering="crispEdges"/>
<rect x="1142" y="482.500" width="5.500" height="5" fill="#eeeeee" stroke="#7a8a99" stroke-width="1"/>
<path d="M1129.5,477.5 H1141.5 Q1142.5,477.5 1142.5,478.5 V485.5 L1135.5,492.5 L1128.5,485.5 V478.5 Q1128.5,477.5 1129.5,477.5 Z" fill="url(#gThumb)" stroke="#4a5a6a" stroke-width="1"/>
<path d="M1134.5,510.5 H1146.5 Q1147.5,510.5 1147.5,511.5 V518.5 L1140.5,525.5 L1133.5,518.5 V511.5 Q1133.5,510.5 1134.5,510.5 Z" fill="url(#gThumb)" stroke="#4a5a6a" stroke-width="1"/>
<path d="M1024.0,429.5 L1018.5,424.0" stroke="#4aa84a" stroke-width="2"/><path d="M1018.5,424.0 L1023.0,424.0 L1018.5,428.5 Z" fill="#5ab85a" stroke="#3a903a" stroke-width="0.400"/><path d="M1028.0,429.5 L1033.5,424.0" stroke="#4aa84a" stroke-width="2"/><path d="M1033.5,424.0 L1029.0,424.0 L1033.5,428.5 Z" fill="#5ab85a" stroke="#3a903a" stroke-width="0.400"/><path d="M1024.0,433.0 L1018.5,438.5" stroke="#4aa84a" stroke-width="2"/><path d="M1018.5,438.5 L1023.0,438.5 L1018.5,434.0 Z" fill="#5ab85a" stroke="#3a903a" stroke-width="0.400"/><path d="M1028.0,433.0 L1033.5,438.5" stroke="#4aa84a" stroke-width="2"/><path d="M1033.5,438.5 L1029.0,438.5 L1033.5,434.0 Z" fill="#5ab85a" stroke="#3a903a" stroke-width="0.400"/>
<path d="M1298.500,757.500 L1298.500,766.500 L1300.800,764.500 L1302.300,767.500 L1303.500,767 L1302,764 L1305,764 Z" fill="#111" stroke="#ddd" stroke-width="0.500"/>
</svg>
<!-- text overlay -->
<svg class="a" style="left:0;top:0;will-change:transform;opacity:0.999;" width="1366" height="768" viewBox="0 0 1366 768">
<text x="12.4" y="17.7" font-family="Liberation Sans" font-size="14" font-weight="bold" fill="#e4e4e4" textLength="63.0" lengthAdjust="spacingAndGlyphs">Activities</text>
<text x="128.0" y="17.7" font-family="Liberation Sans" font-size="14" font-weight="bold" fill="#e4e4e4" stroke="#000" stroke-opacity="0.55" stroke-width="2" paint-order="stroke" textLength="230.8" lengthAdjust="spacingAndGlyphs">edu-wisc-ssec-mcidasv-McIDASV</text>
<text x="646.5" y="17.9" font-family="Liberation Sans" font-size="14" font-weight="bold" fill="#e4e4e4" textLength="75.1" lengthAdjust="spacingAndGlyphs">Wed 11:40</text>
<text x="1308.2" y="17.8" font-family="Liberation Sans" font-size="14" font-weight="bold" fill="#e4e4e4" textLength="46.2" lengthAdjust="spacingAndGlyphs">mcidas</text>
<text x="353.0" y="47.0" font-family="Liberation Sans" font-size="13.5" font-weight="bold" fill="#3c3c3c" textLength="74.0" lengthAdjust="spacingAndGlyphs">McIDAS-V</text>
<text x="8.6" y="71.9" font-family="Liberation Sans" font-size="12.2" font-weight="bold" fill="#222222" textLength="22.8" lengthAdjust="spacingAndGlyphs">File</text>
<text x="43.6" y="71.9" font-family="Liberation Sans" font-size="12.2" font-weight="bold" fill="#222222" textLength="24.8" lengthAdjust="spacingAndGlyphs">Edit</text>
<text x="80.6" y="71.9" font-family="Liberation Sans" font-size="12.2" font-weight="bold" fill="#222222" textLength="46.8" lengthAdjust="spacingAndGlyphs">Display</text>
<text x="139.6" y="71.9" font-family="Liberation Sans" font-size="12.2" font-weight="bold" fill="#222222" textLength="34.8" lengthAdjust="spacingAndGlyphs">Tools</text>
<text x="186.6" y="71.9" font-family="Liberation Sans" font-size="12.2" font-weight="bold" fill="#222222" textLength="44.8" lengthAdjust="spacingAndGlyphs">History</text>
<text x="243.6" y="71.9" font-family="Liberation Sans" font-size="12.2" font-weight="bold" fill="#222222" textLength="49.8" lengthAdjust="spacingAndGlyphs">Bundles</text>
<text x="306.6" y="71.9" font-family="Liberation Sans" font-size="12.2" font-weight="bold" fill="#222222" textLength="50.8" lengthAdjust="spacingAndGlyphs">Window</text>
<text x="369.6" y="71.9" font-family="Liberation Sans" font-size="12.2" font-weight="bold" fill="#222222" textLength="27.8" lengthAdjust="spacingAndGlyphs">Help</text>
<text x="15.6" y="132.7" font-family="Liberation Sans" font-size="12.2" font-weight="bold" fill="#999999" textLength="5.8" lengthAdjust="spacingAndGlyphs">1</text>
<text x="27.6" y="132.7" font-family="Liberation Sans" font-size="12.2" font-weight="bold" fill="#222222" textLength="47.8" lengthAdjust="spacingAndGlyphs">untitled</text>
<text x="34.2" y="167.8" font-family="Liberation Sans" font-size="12.2" font-weight="bold" fill="#222222" textLength="31.0" lengthAdjust="spacingAndGlyphs">View</text>
<text x="77.7" y="167.8" font-family="Liberation Sans" font-size="12.2" font-weight="bold" fill="#222222" textLength="68.9" lengthAdjust="spacingAndGlyphs">Projections</text>
<text x="193.9" y="169.6" font-family="Liberation Sans" font-size="12.2" font-weight="bold" fill="#222222" textLength="44.2" lengthAdjust="spacingAndGlyphs">Panel 1</text>
<text x="283.0" y="165.9" font-family="Liberation Sans" font-size="10" font-weight="normal" fill="#222222" textLength="108.0" lengthAdjust="spacing">2004-04-03 12:15:00Z</text>
<text x="623.1" y="159.3" font-family="Liberation Sans" font-size="14.8" font-weight="bold" fill="#222222" textLength="56.5" lengthAdjust="spacingAndGlyphs">Legend</text>
<text x="588.3" y="177.6" font-family="Liberation Sans" font-size="12.2" font-weight="bold" fill="#222222" textLength="32.4" lengthAdjust="spacingAndGlyphs">Maps</text>
<text x="589.6" y="198.9" font-family="Liberation Sans" font-size="12.2" font-weight="bold" fill="#0055ff" textLength="137.4" lengthAdjust="spacingAndGlyphs">Default Background ...</text>
<text x="558.1" y="213.7" font-family="Liberation Sans" font-size="10.3" font-weight="bold" fill="#222222" textLength="125.7" lengthAdjust="spacingAndGlyphs">North &amp; Central America</text>
<text x="558.1" y="226.5" font-family="Liberation Sans" font-size="10.3" font-weight="bold" fill="#222222" textLength="132.6" lengthAdjust="spacingAndGlyphs">World Political Boundaries</text>
<text x="558.1" y="239.4" font-family="Liberation Sans" font-size="10.3" font-weight="bold" fill="#222222" textLength="85.3" lengthAdjust="spacingAndGlyphs">World Coastlines</text>
<text x="588.3" y="261.9" font-family="Liberation Sans" font-size="12.2" font-weight="bold" fill="#222222" textLength="49.0" lengthAdjust="spacingAndGlyphs">Imagery</text>
<text x="589.6" y="282.9" font-family="Liberation Sans" font-size="12.2" font-weight="bold" fill="#0055ff" textLength="137.4" lengthAdjust="spacingAndGlyphs">03-abril - Image Di...</text>
<text x="558.3" y="313.0" font-family="Liberation Sans" font-size="10.3" font-weight="bold" fill="#222222" textLength="6.4" lengthAdjust="spacingAndGlyphs">0</text>
<text x="712.1" y="313.0" font-family="Liberation Sans" font-size="10.3" font-weight="bold" fill="#222222" textLength="20.6" lengthAdjust="spacingAndGlyphs">255</text>
<text x="15.0" y="758.6" font-family="Liberation Sans" font-size="12.2" font-weight="bold" fill="#222222" textLength="85.7" lengthAdjust="spacingAndGlyphs">16:40:47 GMT</text>
<text x="179.6" y="729.3" font-family="Liberation Mono" font-size="8.6" font-weight="normal" fill="#ffffff" textLength="210.8" lengthAdjust="spacingAndGlyphs">03-abril - Image Display 2004-04-03 12:15:00Z</text>
<text x="784.2" y="115.2" font-family="Liberation Sans" font-size="12.2" font-weight="bold" fill="#222222" textLength="53.5" lengthAdjust="spacingAndGlyphs">Displays</text>
<text x="804.7" y="140.5" font-family="Liberation Sans" font-size="12.2" font-weight="normal" fill="#222222" textLength="47.7" lengthAdjust="spacingAndGlyphs">Imagery</text>
<text x="824.9" y="158.6" font-family="Liberation Sans" font-size="12.2" font-weight="normal" fill="#222222" textLength="82.4" lengthAdjust="spacingAndGlyphs">Image Display</text>
<text x="824.9" y="176.7" font-family="Liberation Sans" font-size="12.2" font-weight="normal" fill="#222222" textLength="187.6" lengthAdjust="spacingAndGlyphs">Image Display Over Topography</text>
<text x="824.9" y="194.7" font-family="Liberation Sans" font-size="12.2" font-weight="normal" fill="#222222" textLength="89.8" lengthAdjust="spacingAndGlyphs">Image Contours</text>
<text x="823.5" y="212.7" font-family="Liberation Sans" font-size="12.2" font-weight="normal" fill="#222222" textLength="90.4" lengthAdjust="spacingAndGlyphs">Scatter Analysis</text>
<text x="804.9" y="230.7" font-family="Liberation Sans" font-size="12.2" font-weight="normal" fill="#222222" textLength="44.9" lengthAdjust="spacingAndGlyphs">General</text>
<text x="804.9" y="248.7" font-family="Liberation Sans" font-size="12.2" font-weight="normal" fill="#222222" textLength="80.8" lengthAdjust="spacingAndGlyphs">Data Transect</text>
<text x="804.9" y="266.8" font-family="Liberation Sans" font-size="12.2" font-weight="normal" fill="#222222" textLength="59.2" lengthAdjust="spacingAndGlyphs">Histogram</text>
<text x="796.8" y="300.8" font-family="Liberation Sans" font-size="11.2" font-weight="bold" fill="#222222" textLength="31.0" lengthAdjust="spacingAndGlyphs">Times</text>
<text x="850.0" y="300.8" font-family="Liberation Sans" font-size="11.2" font-weight="bold" fill="#222222" textLength="35.8" lengthAdjust="spacingAndGlyphs">Region</text>
<text x="907.2" y="300.8" font-family="Liberation Sans" font-size="11.2" font-weight="bold" fill="#222222" textLength="51.5" lengthAdjust="spacingAndGlyphs">Advanced</text>
<text x="790.2" y="349.8" font-family="Liberation Sans" font-size="12.2" font-weight="bold" fill="#222222" textLength="105.9" lengthAdjust="spacingAndGlyphs">Coordinate Type:</text>
<text x="905.3" y="348.4" font-family="Liberation Sans" font-size="12.2" font-weight="bold" fill="#222222" textLength="107.1" lengthAdjust="spacingAndGlyphs">Area Coordinates</text>
<text x="840.2" y="379.9" font-family="Liberation Sans" font-size="12.2" font-weight="bold" fill="#222222" textLength="55.9" lengthAdjust="spacingAndGlyphs">Location:</text>
<text x="905.3" y="378.2" font-family="Liberation Sans" font-size="12.2" font-weight="bold" fill="#222222" textLength="40.6" lengthAdjust="spacingAndGlyphs">Center</text>
<text x="905.6" y="406.4" font-family="Liberation Sans" font-size="12.2" font-weight="bold" fill="#222222" textLength="29.0" lengthAdjust="spacingAndGlyphs">Line:</text>
<text x="941.6" y="406.4" font-family="Liberation Sans" font-size="12.2" font-weight="normal" fill="#222222" textLength="22.8" lengthAdjust="spacingAndGlyphs">727</text>
<text x="997.0" y="406.4" font-family="Liberation Sans" font-size="12.2" font-weight="bold" fill="#222222" textLength="52.7" lengthAdjust="spacingAndGlyphs">Element:</text>
<text x="1057.2" y="406.4" font-family="Liberation Sans" font-size="12.2" font-weight="normal" fill="#222222" textLength="22.8" lengthAdjust="spacingAndGlyphs">407</text>
<text x="825.6" y="435.3" font-family="Liberation Sans" font-size="12.2" font-weight="bold" fill="#222222" textLength="71.0" lengthAdjust="spacingAndGlyphs">Image Size:</text>
<text x="904.8" y="435.3" font-family="Liberation Sans" font-size="12.2" font-weight="normal" fill="#222222" textLength="22.8" lengthAdjust="spacingAndGlyphs">116</text>
<text x="953.3" y="435.3" font-family="Liberation Sans" font-size="12.2" font-weight="normal" fill="#222222" textLength="9.1" lengthAdjust="spacingAndGlyphs">X</text>
<text x="969.3" y="435.3" font-family="Liberation Sans" font-size="12.2" font-weight="normal" fill="#222222" textLength="22.8" lengthAdjust="spacingAndGlyphs">164</text>
<text x="1062.4" y="435.3" font-family="Liberation Sans" font-size="12.2" font-weight="bold" fill="#222222" textLength="141.4" lengthAdjust="spacingAndGlyphs">Raw size: 2600 X 1732</text>
<text x="808.4" y="462.2" font-family="Liberation Sans" font-size="12.2" font-weight="bold" fill="#222222" textLength="88.2" lengthAdjust="spacingAndGlyphs">Magnification:</text>
<text x="809.2" y="599.8" font-family="Liberation Sans" font-size="12.2" font-weight="bold" fill="#222222" textLength="83.0" lengthAdjust="spacingAndGlyphs">Approx. Area:</text>
<text x="967.6" y="488.6" font-family="Liberation Sans" font-size="12.2" font-weight="normal" fill="#222222" textLength="13.8" lengthAdjust="spacingAndGlyphs">-3</text>
<text x="967.6" y="521.4" font-family="Liberation Sans" font-size="12.2" font-weight="normal" fill="#222222" textLength="13.8" lengthAdjust="spacingAndGlyphs">-2</text>
<text x="779.2" y="751.8" font-family="Liberation Sans" font-size="12.2" font-weight="bold" fill="#222222" textLength="46.2" lengthAdjust="spacingAndGlyphs">Display</text>
<text x="901.8" y="488.6" font-family="Liberation Mono" font-size="12" font-weight="bold" fill="#222222" textLength="63.0" lengthAdjust="spacingAndGlyphs" xml:space="preserve">Line Mag=</text>
<text x="901.8" y="521.4" font-family="Liberation Mono" font-size="12" font-weight="bold" fill="#222222" textLength="63.0" lengthAdjust="spacingAndGlyphs" xml:space="preserve">Ele  Mag=</text>
<text x="1162.0" y="488.6" font-family="Liberation Mono" font-size="12" font-weight="bold" fill="#222222" textLength="77.0" lengthAdjust="spacingAndGlyphs" xml:space="preserve">Res=12.0 km</text>
<text x="1162.0" y="521.4" font-family="Liberation Mono" font-size="12" font-weight="bold" fill="#222222" textLength="77.0" lengthAdjust="spacingAndGlyphs" xml:space="preserve">Res=16.0 km</text>
<text x="901.8" y="569.5" font-family="Liberation Mono" font-size="12" font-weight="bold" fill="#222222" textLength="280.0" lengthAdjust="spacingAndGlyphs" xml:space="preserve">Center      Line:    726 Element:    408</text>
<text x="901.8" y="584.6" font-family="Liberation Mono" font-size="12" font-weight="bold" fill="#222222" textLength="280.0" lengthAdjust="spacingAndGlyphs" xml:space="preserve">Upper Left  Line:    552 Element:    244</text>
<text x="901.8" y="599.8" font-family="Liberation Mono" font-size="12" font-weight="bold" fill="#222222" textLength="280.0" lengthAdjust="spacingAndGlyphs" xml:space="preserve">Upper Right Line:    552 Element:    572</text>
<text x="901.8" y="614.9" font-family="Liberation Mono" font-size="12" font-weight="bold" fill="#222222" textLength="280.0" lengthAdjust="spacingAndGlyphs" xml:space="preserve">Lower Left  Line:    900 Element:    244</text>
<text x="901.8" y="630.0" font-family="Liberation Mono" font-size="12" font-weight="bold" fill="#222222" textLength="280.0" lengthAdjust="spacingAndGlyphs" xml:space="preserve">Lower Right Line:    900 Element:    572</text>
</svg>
</body></html>
